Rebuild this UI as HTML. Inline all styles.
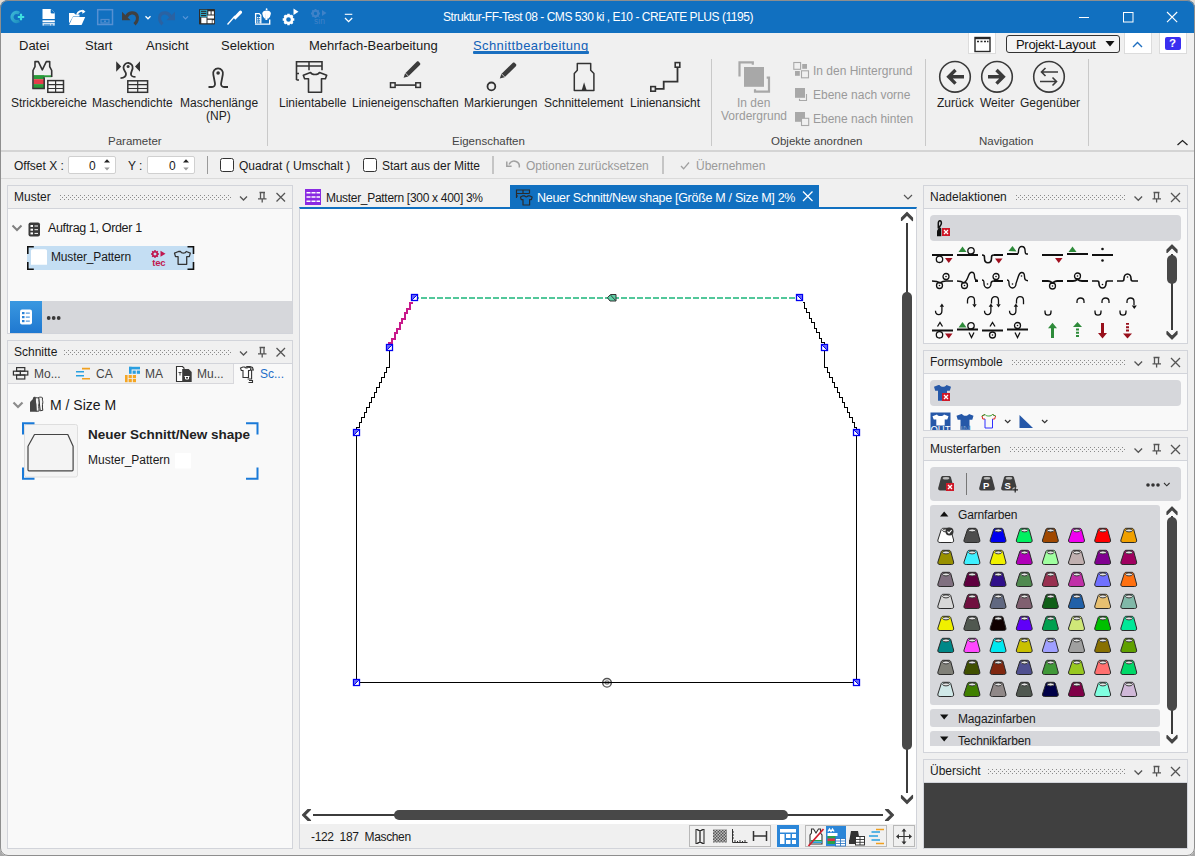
<!DOCTYPE html>
<html><head><meta charset="utf-8">
<style>
*{box-sizing:border-box;margin:0;padding:0}
html,body{width:1195px;height:856px;overflow:hidden;background:linear-gradient(#e4dcd2 0,#e4dcd2 40px,#a8a8a8 800px)}
body{font-family:"Liberation Sans",sans-serif;font-size:12px;color:#1a1a1a;position:relative}
.a{position:absolute}
.t{position:absolute;white-space:nowrap;line-height:1}
#win{position:absolute;left:0;top:0;width:1195px;height:856px;background:#f0f0f0;border-radius:8px;overflow:hidden}
#frame{position:absolute;left:0;top:0;width:1195px;height:856px;border:1px solid #8e8e8e;border-radius:8px;pointer-events:none}
#title{position:absolute;left:0;top:0;width:1195px;height:33px;background:#1170c0}
.panel{position:absolute;border:1px solid #d2d4da;background:#f9f9f9}
.ph{position:absolute;left:0;top:0;right:0;height:23px;background:#f0f0f0;border-bottom:1px solid #d2d4da}
svg{position:absolute;overflow:visible}
.rl{font-size:12px;color:#1e1e1e}
.gl{font-size:11.5px;color:#444}
.sep{position:absolute;width:1px;background:#c9c9c9}
.dis{color:#9a9a9a}
</style></head><body>
<svg width="0" height="0" style="position:absolute">
<defs>
<pattern id="dots" width="4" height="4" patternUnits="userSpaceOnUse"><rect x="0" y="0" width="1" height="1" fill="#8a8a8a"/><rect x="2" y="2" width="1" height="1" fill="#8a8a8a"/></pattern>
<pattern id="chk" width="3" height="3" patternUnits="userSpaceOnUse" x="713" y="829.5"><rect width="1.5" height="1.5" fill="#222"/><rect x="1.5" y="1.5" width="1.5" height="1.5" fill="#222"/></pattern>
</defs>
</svg>
<div id="win">
 <div id="title"></div>
 <!-- C+ -->
 <svg style="left:0;top:0" width="40" height="33">
  <defs><linearGradient id="cg" x1="0" y1="0" x2="1" y2="1"><stop offset="0" stop-color="#3bb6d6"/><stop offset="1" stop-color="#1e90c0"/></linearGradient></defs>
  <path d="M19.2 13.2 A4.6 4.6 0 1 0 19.2 20.8" fill="none" stroke="url(#cg)" stroke-width="3.2"/>
  <path d="M21 13.8v6.4M17.8 17h6.4" stroke="#3ee0e0" stroke-width="2.2"/>
 </svg>
 <!-- doc -->
 <svg style="left:0;top:0" width="60" height="33">
  <path d="M42.5 9h8.5l3.8 3.8V19H42.5z" fill="#fff"/>
  <path d="M51 9v4h3.8" fill="#1170c0"/>
  <path d="M51.2 9.3v3.7h3.5" fill="none" stroke="#1170c0" stroke-width="0.9"/>
  <rect x="42.5" y="20.3" width="12.3" height="1.8" fill="#fff"/>
  <rect x="42.5" y="22.8" width="12.3" height="1" fill="#fff"/>
  <path d="M42.5 24.8h2M45.5 24.8h1M47.5 24.8h1M49.5 24.8h2M52.5 24.8h2.3" stroke="#fff" stroke-width="1.2"/>
 </svg>
 <!-- folder -->
 <svg style="left:0;top:0" width="90" height="33">
  <path d="M69 13h5l1.5 1.5h4v2H73l-4 7z" fill="#fff"/>
  <path d="M69.2 25l3.6-8h12.4l-3.6 8z" fill="#fff"/>
  <path d="M77 14.5c1-3 4-4.5 7-3" fill="none" stroke="#fff" stroke-width="1.8"/>
  <path d="M82.5 9.5l3 2.3-3.2 2" fill="#fff"/>
 </svg>
 <!-- save (disabled) -->
 <svg style="left:0;top:0" width="120" height="33">
  <rect x="97.7" y="9.7" width="14.8" height="14.8" fill="none" stroke="#5690d2" stroke-width="1.5"/>
  <rect x="101" y="19.5" width="8" height="3.5" fill="none" stroke="#4f8ccf" stroke-width="1.2"/>
  <rect x="104" y="20.5" width="2" height="1.5" fill="#4f8ccf"/>
 </svg>
 <!-- undo -->
 <svg style="left:0;top:0" width="200" height="33">
  <path d="M122 11.8V20.3H130.5Z" fill="#404040"/>
  <path d="M126.3 17C128.5 12.3 134.5 11.3 136.8 15.3C138.3 18.3 137 22 134.5 24.3" fill="none" stroke="#404040" stroke-width="3.2"/>
  <path d="M145.5 16.3l2.5 2.5 2.5-2.5" fill="none" stroke="#fff" stroke-width="1.3"/>
  <path d="M175 11.8V20.3H166.5Z" fill="#2a62a2"/>
  <path d="M170.7 17C168.5 12.3 162.5 11.3 160.2 15.3C158.7 18.3 160 22 162.5 24.3" fill="none" stroke="#2a62a2" stroke-width="3.2"/>
  <path d="M183 16.3l2.5 2.5 2.5-2.5" fill="none" stroke="#5a96d8" stroke-width="1.2"/>
 </svg>
 <!-- dark box -->
 <svg style="left:0;top:0" width="360" height="33">
  <rect x="199" y="9" width="16" height="15.5" rx="0.8" fill="#2d2d2d"/>
  <rect x="200.6" y="10.3" width="6.2" height="6.4" fill="none" stroke="#2fb0d0" stroke-width="0.9"/>
  <path d="M200.8 12.4h5.8M200.8 14.5h5.8" stroke="#2fb0d0" stroke-width="0.9"/>
  <rect x="208.3" y="11.3" width="2.3" height="3.2" fill="#fff"/><rect x="211.6" y="11.3" width="2.3" height="3.2" fill="#fff"/>
  <rect x="207.5" y="15.5" width="6.5" height="3" fill="#fff"/>
  <rect x="201.3" y="17.6" width="5.2" height="5.6" fill="#fff"/>
  <rect x="207.5" y="19.8" width="4.3" height="3.4" fill="#fff"/><rect x="212.5" y="20.2" width="1.6" height="3" fill="#fff"/>
  <!-- pen -->
  <path d="M227.5 24.5l7.5-8.5" stroke="#fff" stroke-width="1.3"/>
  <path d="M233.3 17.6l5.8-6.4c.8-.8 2-.8 2.6 0c.6.6.6 1.6-.2 2.4l-6.2 6.2z" fill="#fff"/>
  <!-- device -->
  <path d="M255.6 23.6V13.6h3.6l1.6 1.6v8.4" fill="none" stroke="#fff" stroke-width="1.3"/>
  <path d="M255 24.1H269.7V19.5" fill="none" stroke="#fff" stroke-width="1.4"/>
  <rect x="257.1" y="17" width="1.3" height="1.3" fill="#fff"/><rect x="257.1" y="19.2" width="1.3" height="1.3" fill="#fff"/><rect x="257.1" y="21.4" width="1.3" height="1.3" fill="#fff"/>
  <path d="M259 17.6h1.6M259 19.8h1.6M259 22h1.6" stroke="#fff" stroke-width="1.1"/>
  <path d="M262.3 13.8C262.3 11.6 264.3 10.6 266.6 10.6S270.9 11.6 270.9 13.8L270 16.8L268.6 18.6H264.6L263.2 16.8Z" fill="#fff"/>
  <path d="M266.4 13.8v4.8" stroke="#1170c0" stroke-width="1.3"/>
  <path d="M265.4 14.3c0-.8.5-1.2 1-1.2s1 .4 1 1.2v5.8h-2z" fill="#fff"/>
  <circle cx="266.6" cy="9.2" r="0.9" fill="#fff"/>
  <!-- gear -->
  <g transform="translate(288.5 19.5)">
   <circle r="3.6" fill="none" stroke="#fff" stroke-width="2.6"/>
   <path d="M0-5.8v2.2M0 3.6v2.2M-5.8 0h2.2M3.6 0h2.2M-4.1-4.1l1.6 1.6M2.5 2.5l1.6 1.6M4.1-4.1l-1.6 1.6M-2.5 2.5l-1.6 1.6" stroke="#fff" stroke-width="2.4"/>
  </g>
  <path d="M293.5 8.5l5 3.2-5 3.2z" fill="#fff"/>
  <!-- gear sin disabled -->
  <g transform="translate(315.5 13.5)" opacity="1">
   <circle r="2.7" fill="none" stroke="#3f82c8" stroke-width="2"/>
   <path d="M0-4.5v1.8M0 2.7v1.8M-4.5 0h1.8M2.7 0h1.8M-3.2-3.2l1.3 1.3M1.9 1.9l1.3 1.3M3.2-3.2l-1.3 1.3M-1.9 1.9l-1.3 1.3" stroke="#3f82c8" stroke-width="1.8"/>
  </g>
  <path d="M322 10l4.5 3-4.5 3z" fill="#3f82c8"/>
  <text x="314" y="24.3" font-family="Liberation Sans" font-size="8.5" fill="#3f82c8">sin</text>
  <!-- qat dropdown -->
  <path d="M344.8 14.3h7.5" stroke="#fff" stroke-width="1.1"/>
  <path d="M345 18l3.6 3.6 3.6-3.6" fill="none" stroke="#fff" stroke-width="1.3"/>
 </svg>
 <div class="t" style="left:443px;top:11px;color:#fff;font-size:12px;letter-spacing:-0.47px">Struktur-FF-Test 08 - CMS 530 ki , E10 - CREATE PLUS (1195)</div>
 <!-- window controls -->
 <svg style="left:0;top:0" width="1195" height="33">
  <path d="M1079 17.5h10" stroke="#fff" stroke-width="1"/>
  <rect x="1123.5" y="12.5" width="9.5" height="9.5" fill="none" stroke="#fff" stroke-width="1"/>
  <path d="M1167 12l10.2 10.2M1177.2 12L1167 22.2" stroke="#fff" stroke-width="1.1"/>
 </svg>

 <!-- menu -->
 <div class="t" style="left:19px;top:39px;font-size:13px">Datei</div>
 <div class="t" style="left:85px;top:39px;font-size:13px">Start</div>
 <div class="t" style="left:146px;top:39px;font-size:13px">Ansicht</div>
 <div class="t" style="left:221px;top:39px;font-size:13px">Selektion</div>
 <div class="t" style="left:309px;top:39px;font-size:13px">Mehrfach-Bearbeitung</div>
 <div class="t" style="left:473px;top:39px;font-size:13px;color:#1160b8;letter-spacing:0.4px">Schnittbearbeitung</div>
 <div class="a" style="left:473px;top:51px;width:116px;height:3px;background:#1a6fc0;border-radius:1px"></div>
 <!-- right menu controls -->
 <div class="a" style="left:968px;top:33px;width:28px;height:21px;background:#fff;border:1px solid #dcdcdc;border-top:none"></div>
 <svg style="left:0;top:0" width="1195" height="60">
  <rect x="975" y="37.5" width="15" height="14" fill="none" stroke="#2a2a2a" stroke-width="1.4"/>
  <rect x="975" y="37" width="15" height="2.2" fill="#2a2a2a"/>
  <path d="M977 41.5h2M980.5 41.5h2M984 41.5h2M987 41.5h1.5" stroke="#2a2a2a" stroke-width="1.3"/>
 </svg>
 <div class="a" style="left:1006px;top:35px;width:114px;height:18px;background:#f4f4f4;border:1.3px solid #333;border-radius:3px"></div>
 <div class="t" style="left:1016px;top:38px;font-size:13px;color:#111;letter-spacing:-0.3px">Projekt-Layout</div>
 <svg style="left:0;top:0" width="1195" height="60"><path d="M1105.5 41h9l-4.5 5.5z" fill="#111"/></svg>
 <div class="a" style="left:1124px;top:33px;width:28px;height:21px;background:#fff;border:1px solid #dcdcdc;border-top:none"></div>
 <svg style="left:0;top:0" width="1195" height="60"><path d="M1133 47l4.5-4.5 4.5 4.5" fill="none" stroke="#1f6fc0" stroke-width="1.4"/></svg>
 <div class="a" style="left:1159px;top:33px;width:28px;height:21px;background:#fff;border:1px solid #dcdcdc;border-top:none"></div>
 <div class="a" style="left:1165px;top:37px;width:16px;height:13px;background:#3a2ff0;border-radius:2px"></div>
 <div class="t" style="left:1169px;top:38px;font-size:11.5px;color:#fff;font-weight:bold">?</div>
 <!-- RIBBON -->
 <div class="a" style="left:0;top:150px;width:1195px;height:2px;background:#d4d4d4"></div>
 <div class="sep" style="left:267px;top:59px;height:87px"></div>
 <div class="sep" style="left:711px;top:59px;height:87px"></div>
 <div class="sep" style="left:925px;top:59px;height:87px"></div>
 <div class="sep" style="left:1088px;top:59px;height:87px"></div>
 <svg style="left:0;top:0" width="1195" height="150">
  <!-- Strickbereiche -->
  <rect x="33.5" y="75.3" width="18.2" height="1.9" fill="#2a9a3a"/>
  <rect x="33.5" y="75.3" width="10.6" height="3.9" fill="#2a9a3a"/>
  <rect x="33.5" y="79.2" width="10.6" height="4.9" fill="#e63c4a"/>
  <rect x="33.5" y="84.1" width="10.6" height="4.3" fill="#2a9a3a"/>
  <path d="M33 88.6V70.5L35 66.6V61.6H38.3L42.3 69.8L46.3 61.6H49.7V66.6L51.7 70.5V77" fill="none" stroke="#333" stroke-width="1.6" stroke-linejoin="round"/>
  <path d="M32.3 88.6H44.2V77.2" fill="none" stroke="#333" stroke-width="1.5"/>
  <rect x="47.8" y="80.6" width="15.7" height="11.7" fill="#f7f7f7" stroke="#333" stroke-width="1.5"/>
  <path d="M47.8 84.6h15.7M47.8 88.5h15.7M55.6 80.6v11.7" stroke="#333" stroke-width="1.2"/>
  <!-- Maschendichte -->
  <path d="M116.2 61.3l5 5.2-5 5.2z M140 61.3l-5 5.2 5 5.2z" fill="#333"/>
  <path d="M120.5 78.2C123.5 78 126 76.5 126 74C126 71.8 123.5 70.5 123.5 67.8A4.6 4.6 0 1 1 132.6 68.5C132.2 70.5 130.8 72 131 74.5C131.2 76.2 133 76.8 135.5 76.8" fill="none" stroke="#333" stroke-width="1.8"/>
  <circle cx="128.1" cy="66.6" r="1.5" fill="#333"/>
  <rect x="127.8" y="80.8" width="19.8" height="11.5" fill="#f0f0f0" stroke="#333" stroke-width="1.5"/>
  <path d="M127.8 84.6h19.8M127.8 88.5h19.8M137.7 80.8v11.5" stroke="#333" stroke-width="1.2"/>
  <!-- Maschenlaenge -->
  <path d="M208.5 87H212C214 87 215.3 85.5 215 83.3L213.3 74.5A4.9 4.9 0 1 1 222.8 74.5L221.1 83.3C220.8 85.5 222 87 224.2 87H228" fill="none" stroke="#333" stroke-width="1.8"/>
  <circle cx="218.1" cy="73" r="1.8" fill="#333"/>
  <!-- Linientabelle -->
  <path d="M296.5 80V61.8h25.5v8.5" fill="none" stroke="#333" stroke-width="1.6"/>
  <path d="M296.5 66h25.5M309 61.8v8.5" stroke="#333" stroke-width="1.5"/>
  <path d="M296.5 73.5h2.5M296.5 80h2.5" stroke="#333" stroke-width="1.5"/>
  <path d="M310.5 72.5L303.3 75.2l1.3 3.6h3.9V92.2h13V78.8h3.9l1.3-3.6-7.2-2.7c-.7 1.3-2.3 2-4.5 2s-3.8-.7-4.5-2z" fill="#f0f0f0" stroke="#333" stroke-width="1.6" stroke-linejoin="round"/>
  <!-- Linieneigenschaften -->
  <rect x="390.5" y="82.8" width="4.6" height="4.6" fill="none" stroke="#333" stroke-width="1.5"/>
  <rect x="415.8" y="82.8" width="4.6" height="4.6" fill="none" stroke="#333" stroke-width="1.5"/>
  <path d="M395.2 85.1h20.6" stroke="#333" stroke-width="1.6"/>
  <path d="M403.6 77.8l1.4-4.4 11.7-11.6c.6-.6 1.5-.6 2.1 0l1.1 1.1c.6.6.6 1.5 0 2.1L408.2 76.6z" fill="#3c3c3c"/><path d="M405.3 73l4 4" stroke="#f0f0f0" stroke-width="0.8"/>
  <!-- Markierungen -->
  <circle cx="491.4" cy="86.4" r="3.9" fill="none" stroke="#333" stroke-width="1.8"/>
  <path d="M499.8 78.6l1.5-4.6 11.3-11.1c.6-.6 1.6-.6 2.2 0l1.1 1.1c.6.6.6 1.6 0 2.2L504.6 77.3z" fill="#3c3c3c"/>
  <path d="M501.5 73.8l4 4" stroke="#f0f0f0" stroke-width="0.8"/>
  <!-- Schnittelement -->
  <path d="M577.3 63.4h13.4v6.9l3.2 3.2v17h-19.6v-17l3-3.2z" fill="none" stroke="#333" stroke-width="1.5" stroke-linejoin="round"/>
  <path d="M581.6 90.6l2.5-8.4 2.6 8.4z" fill="#333"/>
  <!-- Linienansicht -->
  <rect x="650.8" y="86.6" width="4.6" height="4.6" fill="none" stroke="#333" stroke-width="1.6"/>
  <rect x="675.2" y="62.6" width="4.6" height="4.6" fill="none" stroke="#333" stroke-width="1.6"/>
  <path d="M655.4 88.9h8.3v-7.2h13.8V67.2" fill="none" stroke="#333" stroke-width="1.8"/>
  <!-- Vordergrund (disabled) -->
  <path d="M739.5 76.5V62.3h13.3v2.5" fill="none" stroke="#a8a8a8" stroke-width="2.2"/>
  <path d="M755 89.3v2.4h14V77.7h-2.3" fill="none" stroke="#a8a8a8" stroke-width="2.2"/>
  <rect x="744" y="67" width="20" height="19.8" fill="#a8a8a8"/>
  <!-- small disabled icons -->
  <rect x="793.8" y="62.5" width="6.8" height="6.8" fill="none" stroke="#a8a8a8" stroke-width="1.1"/>
  <rect x="802.2" y="64" width="4.8" height="4.8" fill="#a8a8a8"/>
  <rect x="795" y="71" width="4.8" height="4.8" fill="#a8a8a8"/>
  <rect x="801.5" y="70.8" width="7" height="7" fill="none" stroke="#a8a8a8" stroke-width="1.1"/>
  <rect x="795" y="88" width="10" height="9.8" fill="#a8a8a8"/>
  <path d="M806.5 94v6.5h-7v-1.8" fill="none" stroke="#a8a8a8" stroke-width="1.1"/>
  <rect x="795" y="112" width="10" height="9.8" fill="#a8a8a8"/>
  <rect x="801.5" y="118.3" width="7.2" height="7.2" fill="#f0f0f0" stroke="#a8a8a8" stroke-width="1.1"/>
  <!-- Navigation -->
  <circle cx="955" cy="76.8" r="15.3" fill="none" stroke="#3a3a3a" stroke-width="1.6"/>
  <path d="M964 76.8h-14.5M955.5 70l-6.8 6.8 6.8 6.8" fill="none" stroke="#3a3a3a" stroke-width="3.4"/>
  <circle cx="997" cy="76.8" r="15.3" fill="none" stroke="#3a3a3a" stroke-width="1.6"/>
  <path d="M988 76.8h14.5M996.5 70l6.8 6.8-6.8 6.8" fill="none" stroke="#3a3a3a" stroke-width="3.4"/>
  <circle cx="1049" cy="76.8" r="15.3" fill="none" stroke="#3a3a3a" stroke-width="1.6"/>
  <path d="M1058 72h-16M1045.5 68l-4 4 4 4" fill="none" stroke="#3a3a3a" stroke-width="1.6"/>
  <path d="M1040 81.5h16M1052.5 77.5l4 4-4 4" fill="none" stroke="#3a3a3a" stroke-width="1.6"/>
  <!-- collapse caret -->
  <path d="M1177.5 145l5-4.5 5 4.5" fill="none" stroke="#222" stroke-width="1.3"/>
 </svg>
 <div class="t rl" style="left:11px;top:97px">Strickbereiche</div>
 <div class="t rl" style="left:92px;top:97px">Maschendichte</div>
 <div class="t rl" style="left:180px;top:97px">Maschenlänge</div>
 <div class="t rl" style="left:206px;top:110px">(NP)</div>
 <div class="t gl" style="left:108px;top:136px">Parameter</div>
 <div class="t rl" style="left:279px;top:97px">Linientabelle</div>
 <div class="t rl" style="left:352px;top:97px">Linieneigenschaften</div>
 <div class="t rl" style="left:464px;top:97px">Markierungen</div>
 <div class="t rl" style="left:544px;top:97px">Schnittelement</div>
 <div class="t rl" style="left:630px;top:97px">Linienansicht</div>
 <div class="t gl" style="left:452px;top:136px">Eigenschaften</div>
 <div class="t rl dis" style="left:737px;top:97px">In den</div>
 <div class="t rl dis" style="left:721px;top:110px">Vordergrund</div>
 <div class="t rl dis" style="left:813px;top:65px">In den Hintergrund</div>
 <div class="t rl dis" style="left:813px;top:89px">Ebene nach vorne</div>
 <div class="t rl dis" style="left:813px;top:113px">Ebene nach hinten</div>
 <div class="t gl" style="left:771px;top:136px">Objekte anordnen</div>
 <div class="t rl" style="left:937px;top:97px">Zurück</div>
 <div class="t rl" style="left:980px;top:97px">Weiter</div>
 <div class="t rl" style="left:1020px;top:97px">Gegenüber</div>
 <div class="t gl" style="left:979px;top:136px">Navigation</div>
 <!-- OPTIONS BAR -->
 <div class="a" style="left:0;top:178px;width:1195px;height:1px;background:#dadada"></div>
 <div class="t" style="left:14px;top:160px;font-size:12px">Offset X :</div>
 <div class="a" style="left:68px;top:156px;width:48px;height:18px;background:#fff;border:1px solid #d0d0d0;border-radius:2px"></div>
 <div class="t" style="left:89px;top:160px;font-size:12px">0</div>
 <div class="t" style="left:128px;top:160px;font-size:12px">Y :</div>
 <div class="a" style="left:147px;top:156px;width:48px;height:18px;background:#fff;border:1px solid #d0d0d0;border-radius:2px"></div>
 <div class="t" style="left:169px;top:160px;font-size:12px">0</div>
 <svg style="left:0;top:0" width="800" height="180">
  <path d="M104 162.5l3-3.3 3 3.3z" fill="#222"/><path d="M104.3 167.5h5.4l-2.7 3z" fill="#9a9a9a"/>
  <path d="M183 162.5l3-3.3 3 3.3z" fill="#222"/><path d="M183.3 167.5h5.4l-2.7 3z" fill="#9a9a9a"/>
  <path d="M207.5 156v18M493 156v18M663 156v18" stroke="#9a9a9a" stroke-width="1"/>
  <rect x="220.5" y="158.5" width="13" height="13" rx="2" fill="#fff" stroke="#333" stroke-width="1"/>
  <rect x="363.5" y="158.5" width="13" height="13" rx="2" fill="#fff" stroke="#333" stroke-width="1"/>
  <path d="M509 164.5c1.5-3 4.5-4 7-3s3.7 3.5 3.3 6" fill="none" stroke="#a0a0a0" stroke-width="1.5"/>
  <path d="M506.8 161.5v4.8h4.8" fill="none" stroke="#a0a0a0" stroke-width="1.5"/>
  <path d="M681 166l2.6 2.8 5.4-6.3" fill="none" stroke="#a0a0a0" stroke-width="1.3"/>
 </svg>
 <div class="t" style="left:239px;top:160px;font-size:12px">Quadrat ( Umschalt )</div>
 <div class="t" style="left:382px;top:160px;font-size:12px">Start aus der Mitte</div>
 <div class="t dis" style="left:526px;top:160px;font-size:12px">Optionen zurücksetzen</div>
 <div class="t dis" style="left:696px;top:160px;font-size:12px">Übernehmen</div>
 <!-- LEFT: Muster -->
 <div class="panel" style="left:7px;top:185px;width:286px;height:149px">
  <div class="ph"></div>
 </div>
 <div class="t" style="left:14px;top:191px;font-size:12px">Muster</div>
 <svg style="left:60px;top:195px" width="172" height="5"><rect width="172" height="5" fill="url(#dots)"/></svg>
 <svg style="left:0;top:0" width="300" height="850">
  <path d="M240 196.5l3.5 3.5 3.5-3.5" fill="none" stroke="#555" stroke-width="1.3"/>
  <path d="M259.5 192.5h5.5M260.5 192.5v6.5M264 192.5v6.5M258 198.8h8.5M262.2 199v3.5" fill="none" stroke="#555" stroke-width="1.3"/>
  <path d="M276.5 193l8.5 8.5M285 193l-8.5 8.5" stroke="#555" stroke-width="1.3"/>
  <!-- tree -->
  <path d="M12.5 225.5l4.5 4.5 4.5-4.5" fill="none" stroke="#808080" stroke-width="2"/>
  <rect x="28.5" y="222.5" width="11.5" height="14" rx="2" fill="#3a3a3a"/>
  <rect x="30.5" y="225" width="2.5" height="2" fill="#fff"/><rect x="30.5" y="228.7" width="2.5" height="2" fill="#fff"/><rect x="30.5" y="232.4" width="2.5" height="2" fill="#fff"/>
  <path d="M34.5 226h3.5M34.5 229.7h3.5M34.5 233.4h3.5" stroke="#fff" stroke-width="1"/>
  <!-- selection -->
  <rect x="27" y="246" width="167" height="24" fill="#c4def3"/>
  <path d="M27.8 254v-7.2h6M187.5 246.8h6v7.2M27.8 262v7.2h6M187.5 269.2h6v-7.2" fill="none" stroke="#111" stroke-width="1.6"/>
  <path d="M31 264.8V251c0-1 .8-1.8 1.8-1.8h12.4c1 0 1.8.8 1.8 1.8v13.8z" fill="#fff"/>
  <!-- tec icon -->
  <g fill="#c0174f">
   <circle cx="155" cy="254" r="2.3" fill="none" stroke="#c0174f" stroke-width="1.6"/>
   <path d="M155 250v1.5M155 256.5v1.5M151 254h1.5M157.5 254h1.5M152.2 251.2l1 1M156.8 255.8l1 1M157.8 251.2l-1 1M153.2 255.8l-1 1" stroke="#c0174f" stroke-width="1.4"/>
   <path d="M160.5 250.8l5 3-5 3z"/>
  </g>
  <text x="152.3" y="265.5" font-family="Liberation Sans" font-weight="bold" font-size="9.5" fill="#c0174f" letter-spacing="-0.3">tec</text>
  <!-- shirt -->
  <path d="M178.5 251.5l-4 1.6 1 3.6h2.6v7.6h8.6v-7.6h2.6l1-3.6-4-1.6c-.5 1.1-1.5 1.6-2.9 1.6s-2.4-.5-2.9-1.6z" fill="none" stroke="#333" stroke-width="1.3" stroke-linejoin="round"/>
 </svg>
 <div class="t" style="left:48px;top:222px;font-size:12.5px;letter-spacing:-0.35px">Auftrag 1, Order 1</div>
 <div class="t" style="left:51px;top:251px;font-size:12px;letter-spacing:-0.15px">Muster_Pattern</div>
 <!-- bottom toolbar -->
 <div class="a" style="left:10px;top:301px;width:282px;height:32px;background:#d6d7db"></div>
 <div class="a" style="left:10px;top:301px;width:32px;height:32px;background:linear-gradient(#3a98e0,#1f78d0)"></div>
 <svg style="left:0;top:0" width="300" height="850">
  <rect x="20" y="309.5" width="12" height="15" rx="2" fill="#fff"/>
  <rect x="22" y="312" width="2.5" height="2.2" fill="#2a82d6"/><rect x="22" y="316" width="2.5" height="2.2" fill="#2a82d6"/><rect x="22" y="320" width="2.5" height="2.2" fill="#2a82d6"/>
  <path d="M25.8 313.1h4M25.8 317.1h4M25.8 321.1h4" stroke="#2a82d6" stroke-width="1"/>
  <circle cx="48.7" cy="318" r="1.9" fill="#3a3a3a"/><circle cx="53.7" cy="318" r="1.9" fill="#3a3a3a"/><circle cx="58.7" cy="318" r="1.9" fill="#3a3a3a"/>
 </svg>

 <!-- LEFT: Schnitte -->
 <div class="panel" style="left:7px;top:340px;width:286px;height:509px">
  <div class="ph"></div>
  <div class="a" style="left:0;top:23px;right:0;height:20px;background:#f0f0f0;border-bottom:1px solid #d8d8dc"></div>
  <div class="a" style="left:225px;top:23px;width:59px;height:20px;background:#f9f9f9;border-left:1px solid #d8d8dc"></div>
 </div>
 <div class="t" style="left:14px;top:346px;font-size:12px">Schnitte</div>
 <svg style="left:64px;top:350px" width="168" height="5"><rect width="168" height="5" fill="url(#dots)"/></svg>
 <svg style="left:0;top:0" width="300" height="850">
  <path d="M240 351.5l3.5 3.5 3.5-3.5" fill="none" stroke="#555" stroke-width="1.3"/>
  <path d="M259.5 347.5h5.5M260.5 347.5v6.5M264 347.5v6.5M258 353.8h8.5M262.2 354v3.5" fill="none" stroke="#555" stroke-width="1.3"/>
  <path d="M276.5 348l8.5 8.5M285 348l-8.5 8.5" stroke="#555" stroke-width="1.3"/>
  <!-- tab icons -->
  <g fill="none" stroke="#333" stroke-width="1.2">
   <rect x="16.6" y="367.6" width="8.2" height="3.6"/><rect x="13.4" y="371.2" width="7" height="3.8"/><rect x="20.4" y="371.2" width="7.4" height="3.8"/><rect x="16.6" y="375" width="8.2" height="4"/>
  </g>
  <path d="M76 371.8h8M76 375.8h8" stroke="#28a0e0" stroke-width="1.6"/>
  <path d="M82 368.6h8M82 378.8h8" stroke="#f0a020" stroke-width="1.6"/>
  <g fill="#2a9ee0">
   <rect x="129" y="366.8" width="2.6" height="7"/><rect x="129" y="366.8" width="11" height="2.6"/>
   <rect x="132.6" y="370.6" width="3.2" height="3.2"/><rect x="136.8" y="370.6" width="3.2" height="3.2"/>
  </g>
  <g fill="#f5a623">
   <rect x="125" y="375" width="2.6" height="7.2"/>
   <rect x="128.6" y="375" width="3.2" height="3.2"/><rect x="132.8" y="375" width="3.2" height="3.2"/>
   <rect x="128.6" y="379" width="3.2" height="3.2"/><rect x="132.8" y="379" width="3.2" height="3.2"/>
  </g>
  <path d="M176.5 366.5h6l1.5 1.5v13.5h-7.5z" fill="#fff" stroke="#333" stroke-width="1.1"/>
  <path d="M178.5 372.5h3M180 372.5v3" stroke="#333" stroke-width="0.9"/>
  <path d="M182.2 369h6.5l3 3v10h-9.5z" fill="#3a3a3a"/>
  <path d="M184.5 376.5h5M185.5 376.5v2.5h3v-2.5" fill="none" stroke="#fff" stroke-width="1"/>
  <path d="M243 367l-2.5 1 .8 2.5h1.7v7h5.5v-7h1.7l.8-2.5-2.5-1c-.3.6-1 1-2 1s-1.7-.4-2-1z" fill="#fff" stroke="#333" stroke-width="1.1"/>
  <path d="M245.5 367.5l1.5-1h3l2.5 1 .8 2.5h-1.7v9h-4" fill="none" stroke="#333" stroke-width="1.1"/>
  <path d="M249 380.5h3.5v2h-4" fill="none" stroke="#333" stroke-width="1.1"/>
  <!-- tree -->
  <path d="M13.5 402.5l4.5 4.5 4.5-4.5" fill="none" stroke="#8c8c8c" stroke-width="2.2"/>
  <path d="M38.5 397.5c1.5-.5 3-.5 4 .3-.5 2 .5 3 .3 5-.5 2-.5 4 0 7.5l-2.5.5z" fill="#f4f4f4" stroke="#333" stroke-width="1"/>
  <path d="M35 398c1.5-.5 3-.3 4 .5-.5 2 .3 3 0 5-.5 2-.3 4 .2 7.5l-3 .3z" fill="#f4f4f4" stroke="#333" stroke-width="1"/>
  <path d="M30 411.7v-8.5c0-1.2.6-2 1.5-2.7l1.2-1.3.5-1.8c.4-.6 1.5-.8 2.4-.3v2c0 1.5.3 3 .8 4.8v7.8z" fill="#454545"/>
  <!-- card -->
  <rect x="24.5" y="424.5" width="53" height="52.5" rx="2" fill="#f4f4f4" stroke="#dedede" stroke-width="1"/>
  <path d="M34.5 434.5h33.3l5.3 11.8v23.5c0 .6-.4 1-1 1H29c-.6 0-1-.4-1-1V446.3z" fill="#f4f4f4" stroke="#444" stroke-width="1.2" stroke-linejoin="round"/>
  <path d="M23 434.5v-11.3h11.5M246 423.2h11.5v11.3M23 467.5v11.3h11.5M246 478.8h11.5v-11.3" fill="none" stroke="#1a7ad8" stroke-width="2"/>
  <rect x="175" y="453" width="16" height="15.5" rx="1" fill="#fff"/>
 </svg>
 <div class="t" style="left:34px;top:368px;font-size:12px;color:#444">Mo...</div>
 <div class="t" style="left:96px;top:368px;font-size:12px;color:#444">CA</div>
 <div class="t" style="left:145px;top:368px;font-size:12px;color:#444">MA</div>
 <div class="t" style="left:197px;top:368px;font-size:12px;color:#444">Mu...</div>
 <div class="t" style="left:260px;top:368px;font-size:12px;color:#1f6fc8">Sc...</div>
 <div class="t" style="left:50px;top:398px;font-size:14px">M / Size M</div>
 <div class="t" style="left:88px;top:428px;font-size:13.5px;font-weight:bold;letter-spacing:0px;color:#222">Neuer Schnitt/New shape</div>
 <div class="t" style="left:88px;top:454px;font-size:12px">Muster_Pattern</div>
 <!-- DOC AREA -->
 <div class="a" style="left:510px;top:185px;width:309px;height:23px;background:#1170c0"></div>
 <div class="a" style="left:299px;top:207px;width:618px;height:642px;background:#fff;border:1px solid #d2d4da;border-top:2px solid #1170c0"></div>
 <div class="a" style="left:300px;top:824px;width:616px;height:24px;background:#f0f0f0"></div>
 <svg style="left:0;top:0" width="1195" height="856">
  <!-- purple tab icon -->
  <rect x="305" y="189" width="16" height="16" fill="#8a2be2"/>
  <path d="M306.5 192.7h4M311.5 192.7h4M316.5 192.7h3.5M306.5 197h4M311.5 197h4M316.5 197h3.5M306.5 201.3h4M311.5 201.3h4M316.5 201.3h3.5" stroke="#fff" stroke-width="1.6"/>
  <!-- active tab icon -->
  <g fill="none" stroke="#2b2b2b" stroke-width="1.2">
   <path d="M516.5 198v-8h13v3.5M516.5 193.5h13M523 190v3.5M516.5 196h1.5"/>
   <path d="M520.5 197l2.5-1.2h1.6c.3.7 1 1 1.7 1s1.4-.3 1.7-1h1.6l2.5 1.2-.7 2.6h-1.8v5.4h-6.6v-5.4h-1.8z" stroke-linejoin="round"/>
  </g>
  <path d="M803 191.5l9.5 9.5M812.5 191.5L803 201" stroke="#fff" stroke-width="1.3"/>
  <path d="M904 195l4 4 4-4" fill="none" stroke="#555" stroke-width="1.2"/>
  <!-- v scrollbar -->
  <path d="M901.5 220.5l5.5-5.5 5.5 5.5v-2.5l-5.5-5.5-5.5 5.5z" fill="#444" stroke="#444" stroke-width="1.2" stroke-linejoin="round"/>
  <rect x="906" y="223" width="2" height="570" fill="#3c3c3c"/>
  <rect x="902" y="292" width="10" height="458" rx="5" fill="#484848"/>
  <path d="M901.5 795.5l5.5 5.5 5.5-5.5v2.5l-5.5 5.5-5.5-5.5z" fill="#444" stroke="#444" stroke-width="1.2" stroke-linejoin="round"/>
  <!-- h scrollbar -->
  <path d="M310.5 809.5l-5.5 5.5 5.5 5.5h-2.5l-5.5-5.5 5.5-5.5z" fill="#444" stroke="#444" stroke-width="1.2" stroke-linejoin="round"/>
  <rect x="313" y="814" width="570" height="2" fill="#3c3c3c"/>
  <rect x="394" y="810" width="394" height="10" rx="5" fill="#484848"/>
  <path d="M885.5 809.5l5.5 5.5-5.5 5.5h2.5l5.5-5.5-5.5-5.5z" fill="#444" stroke="#444" stroke-width="1.2" stroke-linejoin="round"/>
  <!-- status buttons -->
  <rect x="689.5" y="825.5" width="81" height="21" fill="none" stroke="#b8b8b8" stroke-width="1"/>
  <rect x="777" y="825" width="22" height="22" fill="#2b86d8"/>
  <rect x="805.5" y="825.5" width="81" height="21" fill="none" stroke="#b8b8b8" stroke-width="1"/>
  <rect x="826" y="826" width="20" height="20" fill="#2b86d8"/>
  <rect x="893.5" y="825.5" width="21" height="21" fill="none" stroke="#b8b8b8" stroke-width="1"/>
  <!-- icon1 -->
  <path d="M696 829.5h2v1h4v-1h2v14h-2v-1h-4v1h-2z" fill="none" stroke="#333" stroke-width="1.1"/>
  <path d="M700 830v12" stroke="#333" stroke-width="1.4"/>
  <!-- checker -->
  <g fill="#333">
  </g>
  <rect x="713" y="829.5" width="14" height="13" fill="url(#chk)"/>
  <!-- ruler -->
  <path d="M732.5 829v13.5h15M735 840v2.5M737.5 841v1.5M740 840v2.5M742.5 841v1.5M745 840v2.5M732.5 832h1.5M732.5 835h1.5M732.5 838h1.5" fill="none" stroke="#333" stroke-width="1"/>
  <!-- H measure -->
  <path d="M753.5 831v10M766.5 831v10M753.5 836h13" stroke="#333" stroke-width="1.5"/>
  <!-- blue table icon -->
  <path d="M780 829h16v3.5H780zM780 834h4.5v10H780zM786 834h4.5v4H786zM792 834h4v4h-4zM786 840h4.5v4H786zM792 840h4v4h-4z" fill="#fff"/>
  <!-- vest slash -->
  <path d="M810 844v-9l1.5-2v-4h2l2.5 4 2.5-4h2v4l1.5 2v9z" fill="#fff" stroke="#333" stroke-width="1.1"/>
  <rect x="810.5" y="840" width="11.5" height="1.5" fill="#2aa048"/><rect x="810.5" y="841.5" width="11.5" height="1.5" fill="#28a0e0"/>
  <path d="M808.5 846l15-17" stroke="#d02030" stroke-width="1.8"/>
  <!-- active vest+table -->
  <path d="M828 831.5l1.5-2.5 1.5 2.5 1.5-2.5 1.5 2.5" fill="none" stroke="#fff" stroke-width="1.4"/>
  <rect x="827.5" y="833" width="10" height="3" fill="#fff"/>
  <rect x="827.5" y="836" width="8" height="2.5" fill="#2aa048"/><rect x="827.5" y="838.5" width="8" height="2.5" fill="#e03040"/><rect x="827.5" y="841" width="8" height="3" fill="#2aa048"/>
  <rect x="835.5" y="838.5" width="10" height="7.5" fill="#fff" stroke="#1f6fc0" stroke-width="0.8"/>
  <path d="M835.5 841h10M835.5 843.5h10M840.5 838.5v7.5" stroke="#1f6fc0" stroke-width="0.8"/>
  <!-- spool table -->
  <path d="M849 842l2-11h7l1.5 8" fill="#333"/>
  <rect x="849" y="840" width="7" height="4" fill="#333"/>
  <rect x="855.5" y="836.5" width="9" height="8.5" fill="#fff" stroke="#333" stroke-width="1"/>
  <path d="M855.5 839.5h9M855.5 842.3h9M860 836.5v8.5" stroke="#333" stroke-width="0.9"/>
  <!-- CA lines -->
  <path d="M869 836h9M871.5 832h8.5M871.5 840h8.5" stroke="#28a0e0" stroke-width="1.6"/>
  <path d="M876 829.5h8M876 843.5h8" stroke="#f0a020" stroke-width="1.6"/>
  <!-- move -->
  <path d="M904 829.5v14M897 836.5h14" stroke="#333" stroke-width="1.2"/>
  <path d="M904 828.5l-2.5 3h5zM904 844.5l-2.5-3h5zM896 836.5l3-2.5v5zM912 836.5l-3-2.5v5z" fill="#333"/>
 </svg>
 <div class="t" style="left:326px;top:192px;font-size:12px;color:#1a1a1a;letter-spacing:-0.3px">Muster_Pattern [300 x 400] 3%</div>
 <div class="t" style="left:537px;top:192px;font-size:12.5px;color:#fff;letter-spacing:-0.3px">Neuer Schnitt/New shape [Größe M / Size M] 2%</div>
 <div class="t" style="left:311px;top:831px;font-size:12px;letter-spacing:-0.35px">-122&nbsp; 187&nbsp; Maschen</div>
<svg style="left:0;top:0" width="1195" height="856" shape-rendering="crispEdges">
<path d="M356.5 436V682.5H856.5V436" fill="none" stroke="#000" stroke-width="1.1"/>
<path d="M389.5 351V367.5H386.5V372.5H384.5V377.5H381.5V382.5H379.5V387.5H376.5V392.5H374.5V397.5H371.5V402.5H369.5V407.5H366.5V412.5H364.5V417.5H361.5V422.5H359.5V427.5H356.5V430" fill="none" stroke="#000" stroke-width="1.1"/>
<path d="M824.5 351V367.5H827.5V372.5H829.5V377.5H832.5V382.5H834.5V387.5H837.5V392.5H839.5V397.5H842.5V402.5H844.5V407.5H847.5V412.5H849.5V417.5H852.5V422.5H854.5V427.5H856.5V430" fill="none" stroke="#000" stroke-width="1.1"/>
<path d="M802.5 302.5H804.5V308.5H806.5V312.5H809.5V318.5H811.5V322.5H814.5V328.5H816.5V332.5H819.5V338.5H821.5V342.5H824.5V345" fill="none" stroke="#000" stroke-width="1.1"/>
<path d="M413 302.5H409.5V308.5H407V312.5H404.5V318.5H402V322.5H399.5V328.5H397V332.5H394.5V338.5H392V342.5H389V344" fill="none" stroke="#c8188a" stroke-width="2"/>
</svg>
<svg style="left:0;top:0" width="1195" height="856">
<path d="M418 298H796" stroke="#52c79a" stroke-width="2" stroke-dasharray="6 2" stroke-dashoffset="5"/>
<rect x="411.5" y="294.5" width="6" height="6" fill="#fff" stroke="#0000f0" stroke-width="1.3"/><path d="M412 295h5l-5 5z" fill="#6464f8"/><path d="M412.2 299.8L416.8 295.2" stroke="#0000f0" stroke-width="1"/>
<rect x="386.5" y="344.5" width="6" height="6" fill="#fff" stroke="#0000f0" stroke-width="1.3"/><path d="M387 345h5l-5 5z" fill="#6464f8"/><path d="M387.2 349.8L391.8 345.2" stroke="#0000f0" stroke-width="1"/>
<rect x="353.5" y="429.5" width="6" height="6" fill="#fff" stroke="#0000f0" stroke-width="1.3"/><path d="M354 430h5l-5 5z" fill="#6464f8"/><path d="M354.2 434.8L358.8 430.2" stroke="#0000f0" stroke-width="1"/>
<rect x="353.5" y="679.5" width="6" height="6" fill="#fff" stroke="#0000f0" stroke-width="1.3"/><path d="M354 680h5l-5 5z" fill="#6464f8"/><path d="M354.2 684.8L358.8 680.2" stroke="#0000f0" stroke-width="1"/>
<rect x="796.5" y="294.5" width="6" height="6" fill="#fff" stroke="#0000f0" stroke-width="1.3"/><path d="M797 295h5v5z" fill="#6464f8"/><path d="M797.2 295.2L801.8 299.8" stroke="#0000f0" stroke-width="1"/>
<rect x="821.5" y="344.5" width="6" height="6" fill="#fff" stroke="#0000f0" stroke-width="1.3"/><path d="M822 345h5v5z" fill="#6464f8"/><path d="M822.2 345.2L826.8 349.8" stroke="#0000f0" stroke-width="1"/>
<rect x="853.5" y="429.5" width="6" height="6" fill="#fff" stroke="#0000f0" stroke-width="1.3"/><path d="M854 430h5v5z" fill="#6464f8"/><path d="M854.2 430.2L858.8 434.8" stroke="#0000f0" stroke-width="1"/>
<rect x="853.5" y="679.5" width="6" height="6" fill="#fff" stroke="#0000f0" stroke-width="1.3"/><path d="M854 680h5v5z" fill="#6464f8"/><path d="M854.2 680.2L858.8 684.8" stroke="#0000f0" stroke-width="1"/>
<path d="M610.5 294.5h5.5v6.5h-6l-2.6-3.3z" fill="#5ccfa5" stroke="#333" stroke-width="1"/><path d="M610.5 295l5 5.5" stroke="#333" stroke-width="0.9"/>
<circle cx="607" cy="682.8" r="4.3" fill="#fff" stroke="#555" stroke-width="1.4"/><rect x="605" y="681" width="4" height="3" rx="1" fill="none" stroke="#555" stroke-width="1"/><path d="M602 682.5h10" stroke="#000" stroke-width="1.2"/>
</svg><div class="panel" style="left:923px;top:185px;width:265px;height:159px"><div class="ph"></div></div>
<div class="t" style="left:930px;top:191px;font-size:12px">Nadelaktionen</div>
<svg style="left:1016px;top:195px" width="110" height="5"><rect width="110" height="5" fill="url(#dots)"/></svg>
<svg style="left:0;top:0" width="1195" height="856"><path d="M1134.5 196.5l3.8 3.8 3.8-3.8" fill="none" stroke="#555" stroke-width="1.3"/><path d="M1153.5 192.5h6M1154.5 192.5v6.5M1158.5 192.5v6.5M1152.5 198.8h8.5M1156.6 199v3.5" fill="none" stroke="#555" stroke-width="1.3"/><path d="M1171 193l9 9M1180 193l-9 9" stroke="#555" stroke-width="1.3"/></svg>
<div class="panel" style="left:923px;top:350px;width:265px;height:81px"><div class="ph"></div></div>
<div class="t" style="left:930px;top:356px;font-size:12px">Formsymbole</div>
<svg style="left:1012px;top:360px" width="114" height="5"><rect width="114" height="5" fill="url(#dots)"/></svg>
<svg style="left:0;top:0" width="1195" height="856"><path d="M1134.5 361.5l3.8 3.8 3.8-3.8" fill="none" stroke="#555" stroke-width="1.3"/><path d="M1153.5 357.5h6M1154.5 357.5v6.5M1158.5 357.5v6.5M1152.5 363.8h8.5M1156.6 364v3.5" fill="none" stroke="#555" stroke-width="1.3"/><path d="M1171 358l9 9M1180 358l-9 9" stroke="#555" stroke-width="1.3"/></svg>
<div class="panel" style="left:923px;top:437px;width:265px;height:316px"><div class="ph"></div></div>
<div class="t" style="left:930px;top:443px;font-size:12px">Musterfarben</div>
<svg style="left:1010px;top:447px" width="116" height="5"><rect width="116" height="5" fill="url(#dots)"/></svg>
<svg style="left:0;top:0" width="1195" height="856"><path d="M1134.5 448.5l3.8 3.8 3.8-3.8" fill="none" stroke="#555" stroke-width="1.3"/><path d="M1153.5 444.5h6M1154.5 444.5v6.5M1158.5 444.5v6.5M1152.5 450.8h8.5M1156.6 451v3.5" fill="none" stroke="#555" stroke-width="1.3"/><path d="M1171 445l9 9M1180 445l-9 9" stroke="#555" stroke-width="1.3"/></svg>
<div class="panel" style="left:923px;top:759px;width:265px;height:90px"><div class="ph"></div></div>
<div class="t" style="left:930px;top:765px;font-size:12px">Übersicht</div>
<svg style="left:988px;top:769px" width="138" height="5"><rect width="138" height="5" fill="url(#dots)"/></svg>
<svg style="left:0;top:0" width="1195" height="856"><path d="M1134.5 770.5l3.8 3.8 3.8-3.8" fill="none" stroke="#555" stroke-width="1.3"/><path d="M1153.5 766.5h6M1154.5 766.5v6.5M1158.5 766.5v6.5M1152.5 772.8h8.5M1156.6 773v3.5" fill="none" stroke="#555" stroke-width="1.3"/><path d="M1171 767l9 9M1180 767l-9 9" stroke="#555" stroke-width="1.3"/></svg>
<div class="a" style="left:924px;top:783px;width:263px;height:65px;background:#404040"></div>
<div class="a" style="left:930px;top:215px;width:251px;height:26px;background:#d6d7db;border-radius:4px"></div>
<div class="a" style="left:930px;top:380px;width:251px;height:26px;background:#d6d7db;border-radius:4px"></div>
<div class="a" style="left:930px;top:467px;width:251px;height:34px;background:#d6d7db;border-radius:4px"></div>
<div class="a" style="left:930px;top:505px;width:230px;height:200px;background:#d6d7db;border-radius:3px"></div>
<div class="a" style="left:930px;top:709px;width:230px;height:18px;background:#d6d7db;border-radius:3px"></div>
<div class="a" style="left:930px;top:731px;width:230px;height:15px;background:#d6d7db;border-radius:3px 3px 0 0"></div>
<div class="t" style="left:958px;top:509px;font-size:12px;letter-spacing:-0.15px">Garnfarben</div>
<div class="t" style="left:958px;top:713px;font-size:12px;letter-spacing:-0.15px">Magazinfarben</div>
<div class="t" style="left:958px;top:735px;font-size:12px;letter-spacing:-0.15px">Technikfarben</div>
<svg style="left:0;top:0" width="1195" height="856">
<path d="M938.3 228.5V223.5c0-1.8.8-2.8 1.6-2.8s1.5 1 1.5 2.6c0 2.2-2.6 3.2-2.6 5.5" fill="none" stroke="#111" stroke-width="1.5"/><path d="M937 236.2v-4.5c0-1.8 1.2-3.2 2.5-3.8.8-.4 1.8-.3 1.8.8v7.5z" fill="#111"/>
<rect x="942" y="228" width="8" height="8" fill="#d01828"/><path d="M944 230l4 4M948 230l-4 4" stroke="#fff" stroke-width="1.3"/>
<path d="M938.5 385l-4.5 1.8 1.2 4h2.8v10h9v-10h2.8l1.2-4-4.5-1.8c-.6 1.2-1.9 1.8-3.5 1.8s-2.9-.6-3.5-1.8z" fill="#2658a8"/>
<rect x="942" y="393" width="8" height="8" fill="#d01828"/><path d="M944 395l4 4M948 395l-4 4" stroke="#fff" stroke-width="1.3"/>
<defs><clipPath id="fsclip"><rect x="924" y="408" width="263" height="22"/></clipPath></defs><g clip-path="url(#fsclip)">
<rect x="930.5" y="412.5" width="20" height="18" fill="#2658a8"/>
<path d="M937 414.5l-4.5 1.8 1.2 3.2h2.6v6h8.4v-6h2.6l1.2-3.2-4.5-1.8c-.6 1-1.8 1.5-3.5 1.5s-2.9-.5-3.5-1.5z" fill="#fff"/>
<text x="930.5" y="433.5" font-family="Liberation Sans" font-size="10.5" fill="#fff" textLength="20" lengthAdjust="spacingAndGlyphs">OUT</text>
<path d="M961.5 414l-5 1.8 1.2 4h2.8v10h9v-10h2.8l1.2-4-4.5-1.8c-.6 1.2-1.9 1.8-3.5 1.8s-2.9-.6-3.5-1.8z" fill="#2658a8"/>
<text x="960" y="433.5" font-family="Liberation Sans" font-size="10.5" fill="#fff" stroke="#2658a8" stroke-width="0.6">IN</text>
<path d="M985 414.5l-3 1.5 .8 3h2.2" fill="none" stroke="#e02020" stroke-width="1"/><path d="M992.5 414.5l3 1.5-.8 3h-2.2" fill="none" stroke="#e02020" stroke-width="1"/>
<path d="M981.8 416l3.2-1.5c.6 1 2 1.5 3.7 1.5s3.1-.5 3.7-1.5l3.2 1.5" fill="none" stroke="#30a030" stroke-width="1"/>
<path d="M985 419v9h7.5v-9" fill="none" stroke="#3030ff" stroke-width="1"/>
</g>
<path d="M1005 420l2.7 2.7 2.7-2.7" fill="none" stroke="#333" stroke-width="1.2"/><path d="M1042 420l2.7 2.7 2.7-2.7" fill="none" stroke="#333" stroke-width="1.2"/>
<path d="M1019.5 415v13h13.5z" fill="#2658a8"/>
<path d="M941 477.5c.3-1 1-1.5 2-1.5h6c1 0 1.7.5 2 1.5l2.8 10.5c.3 1.6-.5 2.5-2 2.5H940.2c-1.5 0-2.3-.9-2-2.5z" fill="#3e3e3e"/><ellipse cx="946" cy="478.3" rx="3.3" ry="1.3" fill="#bbb"/>
<rect x="946" y="483" width="8" height="8" fill="#d01828"/><path d="M948 485l4 4M952 485l-4 4" stroke="#fff" stroke-width="1.3"/>
<path d="M966.5 473v22" stroke="#777" stroke-width="1"/>
<path d="M982 477.5c.3-1 1-1.5 2-1.5h6c1 0 1.7.5 2 1.5l2.8 10.5c.3 1.6-.5 2.5-2 2.5H981.2c-1.5 0-2.3-.9-2-2.5z" fill="#3e3e3e"/><ellipse cx="987" cy="478.3" rx="3.3" ry="1.3" fill="#bbb"/>
<text x="983" y="489" font-family="Liberation Sans" font-weight="bold" font-size="9.5" fill="#fff">P</text>
<path d="M1004 477.5c.3-1 1-1.5 2-1.5h6c1 0 1.7.5 2 1.5l2.8 10.5c.3 1.6-.5 2.5-2 2.5H1003.2c-1.5 0-2.3-.9-2-2.5z" fill="#3e3e3e"/><ellipse cx="1009" cy="478.3" rx="3.3" ry="1.3" fill="#bbb"/>
<text x="1004.5" y="489" font-family="Liberation Sans" font-weight="bold" font-size="9.5" fill="#fff">S</text>
<path d="M1012.5 489.8h5.5M1015.2 487v5.6" stroke="#d6d7db" stroke-width="3"/><path d="M1012.5 489.8h5.5M1015.2 487v5.6" stroke="#222" stroke-width="1.2"/>
<circle cx="1148" cy="485" r="1.8" fill="#333"/><circle cx="1153" cy="485" r="1.8" fill="#333"/><circle cx="1158" cy="485" r="1.8" fill="#333"/>
<path d="M1164 483l2.8 2.8 2.8-2.8" fill="none" stroke="#333" stroke-width="1.1"/>
<path d="M940 516.5l4.2-5 4.2 5z" fill="#111"/>
<path d="M940 714.5h8.4l-4.2 5z" fill="#111"/>
<path d="M940 736.5h8.4l-4.2 5z" fill="#111"/>
<path d="M941.2 529.8c.3-1 1-1.5 2-1.5h5.6c1 0 1.7.5 2 1.5l2.8 10.2c.4 1.8-.6 2.5-2.2 2.5H940.1c-1.6 0-2.6-.7-2.2-2.5z" fill="#ffffff" stroke="#2a2a2a" stroke-width="1"/><ellipse cx="946.0" cy="530.4" rx="3.4" ry="1.5" fill="#e4e4e4" stroke="#2a2a2a" stroke-width="0.9"/>
<path d="M967.4 529.8c.3-1 1-1.5 2-1.5h5.6c1 0 1.7.5 2 1.5l2.8 10.2c.4 1.8-.6 2.5-2.2 2.5H966.2c-1.6 0-2.6-.7-2.2-2.5z" fill="#4d4d4d" stroke="#2a2a2a" stroke-width="1"/><ellipse cx="972.1" cy="530.4" rx="3.4" ry="1.5" fill="#e4e4e4" stroke="#2a2a2a" stroke-width="0.9"/>
<path d="M993.5 529.8c.3-1 1-1.5 2-1.5h5.6c1 0 1.7.5 2 1.5l2.8 10.2c.4 1.8-.6 2.5-2.2 2.5H992.4c-1.6 0-2.6-.7-2.2-2.5z" fill="#0000f0" stroke="#2a2a2a" stroke-width="1"/><ellipse cx="998.3" cy="530.4" rx="3.4" ry="1.5" fill="#e4e4e4" stroke="#2a2a2a" stroke-width="0.9"/>
<path d="M1019.7 529.8c.3-1 1-1.5 2-1.5h5.6c1 0 1.7.5 2 1.5l2.8 10.2c.4 1.8-.6 2.5-2.2 2.5H1018.6c-1.6 0-2.6-.7-2.2-2.5z" fill="#00f060" stroke="#2a2a2a" stroke-width="1"/><ellipse cx="1024.5" cy="530.4" rx="3.4" ry="1.5" fill="#e4e4e4" stroke="#2a2a2a" stroke-width="0.9"/>
<path d="M1045.8 529.8c.3-1 1-1.5 2-1.5h5.6c1 0 1.7.5 2 1.5l2.8 10.2c.4 1.8-.6 2.5-2.2 2.5H1044.7c-1.6 0-2.6-.7-2.2-2.5z" fill="#a04800" stroke="#2a2a2a" stroke-width="1"/><ellipse cx="1050.6" cy="530.4" rx="3.4" ry="1.5" fill="#e4e4e4" stroke="#2a2a2a" stroke-width="0.9"/>
<path d="M1072.0 529.8c.3-1 1-1.5 2-1.5h5.6c1 0 1.7.5 2 1.5l2.8 10.2c.4 1.8-.6 2.5-2.2 2.5H1070.8c-1.6 0-2.6-.7-2.2-2.5z" fill="#f000f0" stroke="#2a2a2a" stroke-width="1"/><ellipse cx="1076.8" cy="530.4" rx="3.4" ry="1.5" fill="#e4e4e4" stroke="#2a2a2a" stroke-width="0.9"/>
<path d="M1098.1 529.8c.3-1 1-1.5 2-1.5h5.6c1 0 1.7.5 2 1.5l2.8 10.2c.4 1.8-.6 2.5-2.2 2.5H1097.0c-1.6 0-2.6-.7-2.2-2.5z" fill="#ff0000" stroke="#2a2a2a" stroke-width="1"/><ellipse cx="1102.9" cy="530.4" rx="3.4" ry="1.5" fill="#e4e4e4" stroke="#2a2a2a" stroke-width="0.9"/>
<path d="M1124.2 529.8c.3-1 1-1.5 2-1.5h5.6c1 0 1.7.5 2 1.5l2.8 10.2c.4 1.8-.6 2.5-2.2 2.5H1123.1c-1.6 0-2.6-.7-2.2-2.5z" fill="#f0a000" stroke="#2a2a2a" stroke-width="1"/><ellipse cx="1129.0" cy="530.4" rx="3.4" ry="1.5" fill="#e4e4e4" stroke="#2a2a2a" stroke-width="0.9"/>
<path d="M941.2 551.8c.3-1 1-1.5 2-1.5h5.6c1 0 1.7.5 2 1.5l2.8 10.2c.4 1.8-.6 2.5-2.2 2.5H940.1c-1.6 0-2.6-.7-2.2-2.5z" fill="#989000" stroke="#2a2a2a" stroke-width="1"/><ellipse cx="946.0" cy="552.4" rx="3.4" ry="1.5" fill="#e4e4e4" stroke="#2a2a2a" stroke-width="0.9"/>
<path d="M967.4 551.8c.3-1 1-1.5 2-1.5h5.6c1 0 1.7.5 2 1.5l2.8 10.2c.4 1.8-.6 2.5-2.2 2.5H966.2c-1.6 0-2.6-.7-2.2-2.5z" fill="#40f0ff" stroke="#2a2a2a" stroke-width="1"/><ellipse cx="972.1" cy="552.4" rx="3.4" ry="1.5" fill="#e4e4e4" stroke="#2a2a2a" stroke-width="0.9"/>
<path d="M993.5 551.8c.3-1 1-1.5 2-1.5h5.6c1 0 1.7.5 2 1.5l2.8 10.2c.4 1.8-.6 2.5-2.2 2.5H992.4c-1.6 0-2.6-.7-2.2-2.5z" fill="#f0f000" stroke="#2a2a2a" stroke-width="1"/><ellipse cx="998.3" cy="552.4" rx="3.4" ry="1.5" fill="#e4e4e4" stroke="#2a2a2a" stroke-width="0.9"/>
<path d="M1019.7 551.8c.3-1 1-1.5 2-1.5h5.6c1 0 1.7.5 2 1.5l2.8 10.2c.4 1.8-.6 2.5-2.2 2.5H1018.6c-1.6 0-2.6-.7-2.2-2.5z" fill="#b000b8" stroke="#2a2a2a" stroke-width="1"/><ellipse cx="1024.5" cy="552.4" rx="3.4" ry="1.5" fill="#e4e4e4" stroke="#2a2a2a" stroke-width="0.9"/>
<path d="M1045.8 551.8c.3-1 1-1.5 2-1.5h5.6c1 0 1.7.5 2 1.5l2.8 10.2c.4 1.8-.6 2.5-2.2 2.5H1044.7c-1.6 0-2.6-.7-2.2-2.5z" fill="#a0ffa0" stroke="#2a2a2a" stroke-width="1"/><ellipse cx="1050.6" cy="552.4" rx="3.4" ry="1.5" fill="#e4e4e4" stroke="#2a2a2a" stroke-width="0.9"/>
<path d="M1072.0 551.8c.3-1 1-1.5 2-1.5h5.6c1 0 1.7.5 2 1.5l2.8 10.2c.4 1.8-.6 2.5-2.2 2.5H1070.8c-1.6 0-2.6-.7-2.2-2.5z" fill="#c0b0b0" stroke="#2a2a2a" stroke-width="1"/><ellipse cx="1076.8" cy="552.4" rx="3.4" ry="1.5" fill="#e4e4e4" stroke="#2a2a2a" stroke-width="0.9"/>
<path d="M1098.1 551.8c.3-1 1-1.5 2-1.5h5.6c1 0 1.7.5 2 1.5l2.8 10.2c.4 1.8-.6 2.5-2.2 2.5H1097.0c-1.6 0-2.6-.7-2.2-2.5z" fill="#800090" stroke="#2a2a2a" stroke-width="1"/><ellipse cx="1102.9" cy="552.4" rx="3.4" ry="1.5" fill="#e4e4e4" stroke="#2a2a2a" stroke-width="0.9"/>
<path d="M1124.2 551.8c.3-1 1-1.5 2-1.5h5.6c1 0 1.7.5 2 1.5l2.8 10.2c.4 1.8-.6 2.5-2.2 2.5H1123.1c-1.6 0-2.6-.7-2.2-2.5z" fill="#a00060" stroke="#2a2a2a" stroke-width="1"/><ellipse cx="1129.0" cy="552.4" rx="3.4" ry="1.5" fill="#e4e4e4" stroke="#2a2a2a" stroke-width="0.9"/>
<path d="M941.2 573.8c.3-1 1-1.5 2-1.5h5.6c1 0 1.7.5 2 1.5l2.8 10.2c.4 1.8-.6 2.5-2.2 2.5H940.1c-1.6 0-2.6-.7-2.2-2.5z" fill="#807080" stroke="#2a2a2a" stroke-width="1"/><ellipse cx="946.0" cy="574.4" rx="3.4" ry="1.5" fill="#e4e4e4" stroke="#2a2a2a" stroke-width="0.9"/>
<path d="M967.4 573.8c.3-1 1-1.5 2-1.5h5.6c1 0 1.7.5 2 1.5l2.8 10.2c.4 1.8-.6 2.5-2.2 2.5H966.2c-1.6 0-2.6-.7-2.2-2.5z" fill="#600040" stroke="#2a2a2a" stroke-width="1"/><ellipse cx="972.1" cy="574.4" rx="3.4" ry="1.5" fill="#e4e4e4" stroke="#2a2a2a" stroke-width="0.9"/>
<path d="M993.5 573.8c.3-1 1-1.5 2-1.5h5.6c1 0 1.7.5 2 1.5l2.8 10.2c.4 1.8-.6 2.5-2.2 2.5H992.4c-1.6 0-2.6-.7-2.2-2.5z" fill="#30108a" stroke="#2a2a2a" stroke-width="1"/><ellipse cx="998.3" cy="574.4" rx="3.4" ry="1.5" fill="#e4e4e4" stroke="#2a2a2a" stroke-width="0.9"/>
<path d="M1019.7 573.8c.3-1 1-1.5 2-1.5h5.6c1 0 1.7.5 2 1.5l2.8 10.2c.4 1.8-.6 2.5-2.2 2.5H1018.6c-1.6 0-2.6-.7-2.2-2.5z" fill="#508a50" stroke="#2a2a2a" stroke-width="1"/><ellipse cx="1024.5" cy="574.4" rx="3.4" ry="1.5" fill="#e4e4e4" stroke="#2a2a2a" stroke-width="0.9"/>
<path d="M1045.8 573.8c.3-1 1-1.5 2-1.5h5.6c1 0 1.7.5 2 1.5l2.8 10.2c.4 1.8-.6 2.5-2.2 2.5H1044.7c-1.6 0-2.6-.7-2.2-2.5z" fill="#983050" stroke="#2a2a2a" stroke-width="1"/><ellipse cx="1050.6" cy="574.4" rx="3.4" ry="1.5" fill="#e4e4e4" stroke="#2a2a2a" stroke-width="0.9"/>
<path d="M1072.0 573.8c.3-1 1-1.5 2-1.5h5.6c1 0 1.7.5 2 1.5l2.8 10.2c.4 1.8-.6 2.5-2.2 2.5H1070.8c-1.6 0-2.6-.7-2.2-2.5z" fill="#c030a8" stroke="#2a2a2a" stroke-width="1"/><ellipse cx="1076.8" cy="574.4" rx="3.4" ry="1.5" fill="#e4e4e4" stroke="#2a2a2a" stroke-width="0.9"/>
<path d="M1098.1 573.8c.3-1 1-1.5 2-1.5h5.6c1 0 1.7.5 2 1.5l2.8 10.2c.4 1.8-.6 2.5-2.2 2.5H1097.0c-1.6 0-2.6-.7-2.2-2.5z" fill="#7070ff" stroke="#2a2a2a" stroke-width="1"/><ellipse cx="1102.9" cy="574.4" rx="3.4" ry="1.5" fill="#e4e4e4" stroke="#2a2a2a" stroke-width="0.9"/>
<path d="M1124.2 573.8c.3-1 1-1.5 2-1.5h5.6c1 0 1.7.5 2 1.5l2.8 10.2c.4 1.8-.6 2.5-2.2 2.5H1123.1c-1.6 0-2.6-.7-2.2-2.5z" fill="#ff7010" stroke="#2a2a2a" stroke-width="1"/><ellipse cx="1129.0" cy="574.4" rx="3.4" ry="1.5" fill="#e4e4e4" stroke="#2a2a2a" stroke-width="0.9"/>
<path d="M941.2 595.8c.3-1 1-1.5 2-1.5h5.6c1 0 1.7.5 2 1.5l2.8 10.2c.4 1.8-.6 2.5-2.2 2.5H940.1c-1.6 0-2.6-.7-2.2-2.5z" fill="#d8d8d8" stroke="#2a2a2a" stroke-width="1"/><ellipse cx="946.0" cy="596.4" rx="3.4" ry="1.5" fill="#e4e4e4" stroke="#2a2a2a" stroke-width="0.9"/>
<path d="M967.4 595.8c.3-1 1-1.5 2-1.5h5.6c1 0 1.7.5 2 1.5l2.8 10.2c.4 1.8-.6 2.5-2.2 2.5H966.2c-1.6 0-2.6-.7-2.2-2.5z" fill="#701040" stroke="#2a2a2a" stroke-width="1"/><ellipse cx="972.1" cy="596.4" rx="3.4" ry="1.5" fill="#e4e4e4" stroke="#2a2a2a" stroke-width="0.9"/>
<path d="M993.5 595.8c.3-1 1-1.5 2-1.5h5.6c1 0 1.7.5 2 1.5l2.8 10.2c.4 1.8-.6 2.5-2.2 2.5H992.4c-1.6 0-2.6-.7-2.2-2.5z" fill="#606880" stroke="#2a2a2a" stroke-width="1"/><ellipse cx="998.3" cy="596.4" rx="3.4" ry="1.5" fill="#e4e4e4" stroke="#2a2a2a" stroke-width="0.9"/>
<path d="M1019.7 595.8c.3-1 1-1.5 2-1.5h5.6c1 0 1.7.5 2 1.5l2.8 10.2c.4 1.8-.6 2.5-2.2 2.5H1018.6c-1.6 0-2.6-.7-2.2-2.5z" fill="#806070" stroke="#2a2a2a" stroke-width="1"/><ellipse cx="1024.5" cy="596.4" rx="3.4" ry="1.5" fill="#e4e4e4" stroke="#2a2a2a" stroke-width="0.9"/>
<path d="M1045.8 595.8c.3-1 1-1.5 2-1.5h5.6c1 0 1.7.5 2 1.5l2.8 10.2c.4 1.8-.6 2.5-2.2 2.5H1044.7c-1.6 0-2.6-.7-2.2-2.5z" fill="#106018" stroke="#2a2a2a" stroke-width="1"/><ellipse cx="1050.6" cy="596.4" rx="3.4" ry="1.5" fill="#e4e4e4" stroke="#2a2a2a" stroke-width="0.9"/>
<path d="M1072.0 595.8c.3-1 1-1.5 2-1.5h5.6c1 0 1.7.5 2 1.5l2.8 10.2c.4 1.8-.6 2.5-2.2 2.5H1070.8c-1.6 0-2.6-.7-2.2-2.5z" fill="#2060a8" stroke="#2a2a2a" stroke-width="1"/><ellipse cx="1076.8" cy="596.4" rx="3.4" ry="1.5" fill="#e4e4e4" stroke="#2a2a2a" stroke-width="0.9"/>
<path d="M1098.1 595.8c.3-1 1-1.5 2-1.5h5.6c1 0 1.7.5 2 1.5l2.8 10.2c.4 1.8-.6 2.5-2.2 2.5H1097.0c-1.6 0-2.6-.7-2.2-2.5z" fill="#e8c070" stroke="#2a2a2a" stroke-width="1"/><ellipse cx="1102.9" cy="596.4" rx="3.4" ry="1.5" fill="#e4e4e4" stroke="#2a2a2a" stroke-width="0.9"/>
<path d="M1124.2 595.8c.3-1 1-1.5 2-1.5h5.6c1 0 1.7.5 2 1.5l2.8 10.2c.4 1.8-.6 2.5-2.2 2.5H1123.1c-1.6 0-2.6-.7-2.2-2.5z" fill="#80b8a8" stroke="#2a2a2a" stroke-width="1"/><ellipse cx="1129.0" cy="596.4" rx="3.4" ry="1.5" fill="#e4e4e4" stroke="#2a2a2a" stroke-width="0.9"/>
<path d="M941.2 617.8c.3-1 1-1.5 2-1.5h5.6c1 0 1.7.5 2 1.5l2.8 10.2c.4 1.8-.6 2.5-2.2 2.5H940.1c-1.6 0-2.6-.7-2.2-2.5z" fill="#f0f000" stroke="#2a2a2a" stroke-width="1"/><ellipse cx="946.0" cy="618.4" rx="3.4" ry="1.5" fill="#e4e4e4" stroke="#2a2a2a" stroke-width="0.9"/>
<path d="M967.4 617.8c.3-1 1-1.5 2-1.5h5.6c1 0 1.7.5 2 1.5l2.8 10.2c.4 1.8-.6 2.5-2.2 2.5H966.2c-1.6 0-2.6-.7-2.2-2.5z" fill="#505850" stroke="#2a2a2a" stroke-width="1"/><ellipse cx="972.1" cy="618.4" rx="3.4" ry="1.5" fill="#e4e4e4" stroke="#2a2a2a" stroke-width="0.9"/>
<path d="M993.5 617.8c.3-1 1-1.5 2-1.5h5.6c1 0 1.7.5 2 1.5l2.8 10.2c.4 1.8-.6 2.5-2.2 2.5H992.4c-1.6 0-2.6-.7-2.2-2.5z" fill="#100000" stroke="#2a2a2a" stroke-width="1"/><ellipse cx="998.3" cy="618.4" rx="3.4" ry="1.5" fill="#e4e4e4" stroke="#2a2a2a" stroke-width="0.9"/>
<path d="M1019.7 617.8c.3-1 1-1.5 2-1.5h5.6c1 0 1.7.5 2 1.5l2.8 10.2c.4 1.8-.6 2.5-2.2 2.5H1018.6c-1.6 0-2.6-.7-2.2-2.5z" fill="#6000f8" stroke="#2a2a2a" stroke-width="1"/><ellipse cx="1024.5" cy="618.4" rx="3.4" ry="1.5" fill="#e4e4e4" stroke="#2a2a2a" stroke-width="0.9"/>
<path d="M1045.8 617.8c.3-1 1-1.5 2-1.5h5.6c1 0 1.7.5 2 1.5l2.8 10.2c.4 1.8-.6 2.5-2.2 2.5H1044.7c-1.6 0-2.6-.7-2.2-2.5z" fill="#00a050" stroke="#2a2a2a" stroke-width="1"/><ellipse cx="1050.6" cy="618.4" rx="3.4" ry="1.5" fill="#e4e4e4" stroke="#2a2a2a" stroke-width="0.9"/>
<path d="M1072.0 617.8c.3-1 1-1.5 2-1.5h5.6c1 0 1.7.5 2 1.5l2.8 10.2c.4 1.8-.6 2.5-2.2 2.5H1070.8c-1.6 0-2.6-.7-2.2-2.5z" fill="#d0e878" stroke="#2a2a2a" stroke-width="1"/><ellipse cx="1076.8" cy="618.4" rx="3.4" ry="1.5" fill="#e4e4e4" stroke="#2a2a2a" stroke-width="0.9"/>
<path d="M1098.1 617.8c.3-1 1-1.5 2-1.5h5.6c1 0 1.7.5 2 1.5l2.8 10.2c.4 1.8-.6 2.5-2.2 2.5H1097.0c-1.6 0-2.6-.7-2.2-2.5z" fill="#00c000" stroke="#2a2a2a" stroke-width="1"/><ellipse cx="1102.9" cy="618.4" rx="3.4" ry="1.5" fill="#e4e4e4" stroke="#2a2a2a" stroke-width="0.9"/>
<path d="M1124.2 617.8c.3-1 1-1.5 2-1.5h5.6c1 0 1.7.5 2 1.5l2.8 10.2c.4 1.8-.6 2.5-2.2 2.5H1123.1c-1.6 0-2.6-.7-2.2-2.5z" fill="#00e898" stroke="#2a2a2a" stroke-width="1"/><ellipse cx="1129.0" cy="618.4" rx="3.4" ry="1.5" fill="#e4e4e4" stroke="#2a2a2a" stroke-width="0.9"/>
<path d="M941.2 639.8c.3-1 1-1.5 2-1.5h5.6c1 0 1.7.5 2 1.5l2.8 10.2c.4 1.8-.6 2.5-2.2 2.5H940.1c-1.6 0-2.6-.7-2.2-2.5z" fill="#008888" stroke="#2a2a2a" stroke-width="1"/><ellipse cx="946.0" cy="640.4" rx="3.4" ry="1.5" fill="#e4e4e4" stroke="#2a2a2a" stroke-width="0.9"/>
<path d="M967.4 639.8c.3-1 1-1.5 2-1.5h5.6c1 0 1.7.5 2 1.5l2.8 10.2c.4 1.8-.6 2.5-2.2 2.5H966.2c-1.6 0-2.6-.7-2.2-2.5z" fill="#ff48ff" stroke="#2a2a2a" stroke-width="1"/><ellipse cx="972.1" cy="640.4" rx="3.4" ry="1.5" fill="#e4e4e4" stroke="#2a2a2a" stroke-width="0.9"/>
<path d="M993.5 639.8c.3-1 1-1.5 2-1.5h5.6c1 0 1.7.5 2 1.5l2.8 10.2c.4 1.8-.6 2.5-2.2 2.5H992.4c-1.6 0-2.6-.7-2.2-2.5z" fill="#00e8f0" stroke="#2a2a2a" stroke-width="1"/><ellipse cx="998.3" cy="640.4" rx="3.4" ry="1.5" fill="#e4e4e4" stroke="#2a2a2a" stroke-width="0.9"/>
<path d="M1019.7 639.8c.3-1 1-1.5 2-1.5h5.6c1 0 1.7.5 2 1.5l2.8 10.2c.4 1.8-.6 2.5-2.2 2.5H1018.6c-1.6 0-2.6-.7-2.2-2.5z" fill="#c8c000" stroke="#2a2a2a" stroke-width="1"/><ellipse cx="1024.5" cy="640.4" rx="3.4" ry="1.5" fill="#e4e4e4" stroke="#2a2a2a" stroke-width="0.9"/>
<path d="M1045.8 639.8c.3-1 1-1.5 2-1.5h5.6c1 0 1.7.5 2 1.5l2.8 10.2c.4 1.8-.6 2.5-2.2 2.5H1044.7c-1.6 0-2.6-.7-2.2-2.5z" fill="#a0a0ff" stroke="#2a2a2a" stroke-width="1"/><ellipse cx="1050.6" cy="640.4" rx="3.4" ry="1.5" fill="#e4e4e4" stroke="#2a2a2a" stroke-width="0.9"/>
<path d="M1072.0 639.8c.3-1 1-1.5 2-1.5h5.6c1 0 1.7.5 2 1.5l2.8 10.2c.4 1.8-.6 2.5-2.2 2.5H1070.8c-1.6 0-2.6-.7-2.2-2.5z" fill="#a0a0a0" stroke="#2a2a2a" stroke-width="1"/><ellipse cx="1076.8" cy="640.4" rx="3.4" ry="1.5" fill="#e4e4e4" stroke="#2a2a2a" stroke-width="0.9"/>
<path d="M1098.1 639.8c.3-1 1-1.5 2-1.5h5.6c1 0 1.7.5 2 1.5l2.8 10.2c.4 1.8-.6 2.5-2.2 2.5H1097.0c-1.6 0-2.6-.7-2.2-2.5z" fill="#887000" stroke="#2a2a2a" stroke-width="1"/><ellipse cx="1102.9" cy="640.4" rx="3.4" ry="1.5" fill="#e4e4e4" stroke="#2a2a2a" stroke-width="0.9"/>
<path d="M1124.2 639.8c.3-1 1-1.5 2-1.5h5.6c1 0 1.7.5 2 1.5l2.8 10.2c.4 1.8-.6 2.5-2.2 2.5H1123.1c-1.6 0-2.6-.7-2.2-2.5z" fill="#60a000" stroke="#2a2a2a" stroke-width="1"/><ellipse cx="1129.0" cy="640.4" rx="3.4" ry="1.5" fill="#e4e4e4" stroke="#2a2a2a" stroke-width="0.9"/>
<path d="M941.2 661.8c.3-1 1-1.5 2-1.5h5.6c1 0 1.7.5 2 1.5l2.8 10.2c.4 1.8-.6 2.5-2.2 2.5H940.1c-1.6 0-2.6-.7-2.2-2.5z" fill="#808078" stroke="#2a2a2a" stroke-width="1"/><ellipse cx="946.0" cy="662.4" rx="3.4" ry="1.5" fill="#e4e4e4" stroke="#2a2a2a" stroke-width="0.9"/>
<path d="M967.4 661.8c.3-1 1-1.5 2-1.5h5.6c1 0 1.7.5 2 1.5l2.8 10.2c.4 1.8-.6 2.5-2.2 2.5H966.2c-1.6 0-2.6-.7-2.2-2.5z" fill="#405000" stroke="#2a2a2a" stroke-width="1"/><ellipse cx="972.1" cy="662.4" rx="3.4" ry="1.5" fill="#e4e4e4" stroke="#2a2a2a" stroke-width="0.9"/>
<path d="M993.5 661.8c.3-1 1-1.5 2-1.5h5.6c1 0 1.7.5 2 1.5l2.8 10.2c.4 1.8-.6 2.5-2.2 2.5H992.4c-1.6 0-2.6-.7-2.2-2.5z" fill="#802810" stroke="#2a2a2a" stroke-width="1"/><ellipse cx="998.3" cy="662.4" rx="3.4" ry="1.5" fill="#e4e4e4" stroke="#2a2a2a" stroke-width="0.9"/>
<path d="M1019.7 661.8c.3-1 1-1.5 2-1.5h5.6c1 0 1.7.5 2 1.5l2.8 10.2c.4 1.8-.6 2.5-2.2 2.5H1018.6c-1.6 0-2.6-.7-2.2-2.5z" fill="#505090" stroke="#2a2a2a" stroke-width="1"/><ellipse cx="1024.5" cy="662.4" rx="3.4" ry="1.5" fill="#e4e4e4" stroke="#2a2a2a" stroke-width="0.9"/>
<path d="M1045.8 661.8c.3-1 1-1.5 2-1.5h5.6c1 0 1.7.5 2 1.5l2.8 10.2c.4 1.8-.6 2.5-2.2 2.5H1044.7c-1.6 0-2.6-.7-2.2-2.5z" fill="#409838" stroke="#2a2a2a" stroke-width="1"/><ellipse cx="1050.6" cy="662.4" rx="3.4" ry="1.5" fill="#e4e4e4" stroke="#2a2a2a" stroke-width="0.9"/>
<path d="M1072.0 661.8c.3-1 1-1.5 2-1.5h5.6c1 0 1.7.5 2 1.5l2.8 10.2c.4 1.8-.6 2.5-2.2 2.5H1070.8c-1.6 0-2.6-.7-2.2-2.5z" fill="#98c820" stroke="#2a2a2a" stroke-width="1"/><ellipse cx="1076.8" cy="662.4" rx="3.4" ry="1.5" fill="#e4e4e4" stroke="#2a2a2a" stroke-width="0.9"/>
<path d="M1098.1 661.8c.3-1 1-1.5 2-1.5h5.6c1 0 1.7.5 2 1.5l2.8 10.2c.4 1.8-.6 2.5-2.2 2.5H1097.0c-1.6 0-2.6-.7-2.2-2.5z" fill="#ff7070" stroke="#2a2a2a" stroke-width="1"/><ellipse cx="1102.9" cy="662.4" rx="3.4" ry="1.5" fill="#e4e4e4" stroke="#2a2a2a" stroke-width="0.9"/>
<path d="M1124.2 661.8c.3-1 1-1.5 2-1.5h5.6c1 0 1.7.5 2 1.5l2.8 10.2c.4 1.8-.6 2.5-2.2 2.5H1123.1c-1.6 0-2.6-.7-2.2-2.5z" fill="#00d868" stroke="#2a2a2a" stroke-width="1"/><ellipse cx="1129.0" cy="662.4" rx="3.4" ry="1.5" fill="#e4e4e4" stroke="#2a2a2a" stroke-width="0.9"/>
<path d="M941.2 683.8c.3-1 1-1.5 2-1.5h5.6c1 0 1.7.5 2 1.5l2.8 10.2c.4 1.8-.6 2.5-2.2 2.5H940.1c-1.6 0-2.6-.7-2.2-2.5z" fill="#d0e8e8" stroke="#2a2a2a" stroke-width="1"/><ellipse cx="946.0" cy="684.4" rx="3.4" ry="1.5" fill="#e4e4e4" stroke="#2a2a2a" stroke-width="0.9"/>
<path d="M967.4 683.8c.3-1 1-1.5 2-1.5h5.6c1 0 1.7.5 2 1.5l2.8 10.2c.4 1.8-.6 2.5-2.2 2.5H966.2c-1.6 0-2.6-.7-2.2-2.5z" fill="#408000" stroke="#2a2a2a" stroke-width="1"/><ellipse cx="972.1" cy="684.4" rx="3.4" ry="1.5" fill="#e4e4e4" stroke="#2a2a2a" stroke-width="0.9"/>
<path d="M993.5 683.8c.3-1 1-1.5 2-1.5h5.6c1 0 1.7.5 2 1.5l2.8 10.2c.4 1.8-.6 2.5-2.2 2.5H992.4c-1.6 0-2.6-.7-2.2-2.5z" fill="#908888" stroke="#2a2a2a" stroke-width="1"/><ellipse cx="998.3" cy="684.4" rx="3.4" ry="1.5" fill="#e4e4e4" stroke="#2a2a2a" stroke-width="0.9"/>
<path d="M1019.7 683.8c.3-1 1-1.5 2-1.5h5.6c1 0 1.7.5 2 1.5l2.8 10.2c.4 1.8-.6 2.5-2.2 2.5H1018.6c-1.6 0-2.6-.7-2.2-2.5z" fill="#505850" stroke="#2a2a2a" stroke-width="1"/><ellipse cx="1024.5" cy="684.4" rx="3.4" ry="1.5" fill="#e4e4e4" stroke="#2a2a2a" stroke-width="0.9"/>
<path d="M1045.8 683.8c.3-1 1-1.5 2-1.5h5.6c1 0 1.7.5 2 1.5l2.8 10.2c.4 1.8-.6 2.5-2.2 2.5H1044.7c-1.6 0-2.6-.7-2.2-2.5z" fill="#000048" stroke="#2a2a2a" stroke-width="1"/><ellipse cx="1050.6" cy="684.4" rx="3.4" ry="1.5" fill="#e4e4e4" stroke="#2a2a2a" stroke-width="0.9"/>
<path d="M1072.0 683.8c.3-1 1-1.5 2-1.5h5.6c1 0 1.7.5 2 1.5l2.8 10.2c.4 1.8-.6 2.5-2.2 2.5H1070.8c-1.6 0-2.6-.7-2.2-2.5z" fill="#800048" stroke="#2a2a2a" stroke-width="1"/><ellipse cx="1076.8" cy="684.4" rx="3.4" ry="1.5" fill="#e4e4e4" stroke="#2a2a2a" stroke-width="0.9"/>
<path d="M1098.1 683.8c.3-1 1-1.5 2-1.5h5.6c1 0 1.7.5 2 1.5l2.8 10.2c.4 1.8-.6 2.5-2.2 2.5H1097.0c-1.6 0-2.6-.7-2.2-2.5z" fill="#80ffe0" stroke="#2a2a2a" stroke-width="1"/><ellipse cx="1102.9" cy="684.4" rx="3.4" ry="1.5" fill="#e4e4e4" stroke="#2a2a2a" stroke-width="0.9"/>
<path d="M1124.2 683.8c.3-1 1-1.5 2-1.5h5.6c1 0 1.7.5 2 1.5l2.8 10.2c.4 1.8-.6 2.5-2.2 2.5H1123.1c-1.6 0-2.6-.7-2.2-2.5z" fill="#d0b8d8" stroke="#2a2a2a" stroke-width="1"/><ellipse cx="1129.0" cy="684.4" rx="3.4" ry="1.5" fill="#e4e4e4" stroke="#2a2a2a" stroke-width="0.9"/>
<circle cx="949.5" cy="531.5" r="4" fill="#333"/><path d="M947.5 531.5l1.5 1.6 2.6-3" fill="none" stroke="#fff" stroke-width="1.1"/>
<path d="M1167 252.5l5-5 5 5v-2.5l-5-5-5 5z" fill="#444" stroke="#444" stroke-width="1.2" stroke-linejoin="round"/><rect x="1171" y="254" width="2" height="76" fill="#3c3c3c"/><rect x="1167" y="255" width="10" height="29" rx="5" fill="#484848"/><path d="M1167 331.5l5 5 5-5v2.5l-5 5-5-5z" fill="#444" stroke="#444" stroke-width="1.2" stroke-linejoin="round"/>
<path d="M1167 514.5l5-5 5 5v-2.5l-5-5-5 5z" fill="#444" stroke="#444" stroke-width="1.2" stroke-linejoin="round"/><rect x="1171" y="516" width="2" height="218" fill="#3c3c3c"/><rect x="1167" y="517" width="10" height="194" rx="5" fill="#484848"/><path d="M1167 735.5l5 5 5-5v2.5l-5 5-5-5z" fill="#444" stroke="#444" stroke-width="1.2" stroke-linejoin="round"/>
<g transform="translate(932 245.5)" fill="none" stroke="#111" stroke-width="1.3"><path d="M0 9.5H21" stroke-width="2"/><circle cx="7.5" cy="13.8" r="3.2"/><path d="M13 12.5h7.5l-3.75 5z" fill="#a01020" stroke="none"/></g>
<g transform="translate(957 245.5)" fill="none" stroke="#111" stroke-width="1.3"><path d="M1.5 6.5l4-5.5 4 5.5z" fill="#2e8b3a" stroke="none"/><path d="M0 9.5H21" stroke-width="2"/><circle cx="14" cy="5.3" r="3.2"/></g>
<g transform="translate(982 245.5)" fill="none" stroke="#111" stroke-width="1.3"><path d="M0 9.5c2.5 0 2.5 1 2.5 3.2 0 2.8 1.6 4.5 3.5 4.5s3.5-1.7 3.5-4.5c0-2.2 0-3.2 2.5-3.2H21" stroke-width="1.6"/><path d="M12 9.5H21" stroke-width="2"/><path d="M13 13h7.5l-3.75 5z" fill="#a01020" stroke="none"/></g>
<g transform="translate(1007 245.5)" fill="none" stroke="#111" stroke-width="1.3"><path d="M1.5 5.5l4-5 4 5.5z" fill="#2e8b3a" stroke="none"/><path d="M0 8.5H11" stroke-width="2"/><path d="M10 8.5c1.5 0 1.5-1 1.5-3 0-3 1.5-4.5 3.3-4.5s3.3 1.5 3.3 4.5c0 2 0 3 1.5 3h1.4" stroke-width="1.4"/></g>
<g transform="translate(1042 245.5)" fill="none" stroke="#111" stroke-width="1.3"><path d="M0 9.5H21" stroke-width="2"/><path d="M13 12.5h7.5l-3.75 5z" fill="#a01020" stroke="none"/></g>
<g transform="translate(1067 245.5)" fill="none" stroke="#111" stroke-width="1.3"><path d="M1.5 6.5l4-5.5 4 5.5z" fill="#2e8b3a" stroke="none"/><path d="M0 8.5H21" stroke-width="2"/></g>
<g transform="translate(1092 245.5)" fill="none" stroke="#111" stroke-width="1.3"><path d="M0 9.5H21" stroke-width="2"/><circle cx="10.5" cy="3.5" r="1.3" fill="#111" stroke="none"/><circle cx="10.5" cy="15" r="1.3" fill="#111" stroke="none"/></g>
<g transform="translate(932 271.5)" fill="none" stroke="#111" stroke-width="1.3"><path d="M0 9.5c4 0 6 .5 8 1.8 2-1.3 4-1.8 6-1.8h7" stroke-width="1.6"/><circle cx="7.5" cy="14" r="3"/><circle cx="7.5" cy="14" r="0.8" fill="#111" stroke="none"/><circle cx="14" cy="5" r="3"/><circle cx="14" cy="5" r="0.8" fill="#111" stroke="none"/></g>
<g transform="translate(957 271.5)" fill="none" stroke="#111" stroke-width="1.3"><path d="M0 9.5c3 0 5 .5 7 1.8c2.5-1.5 3.5-4 4.5-7 .7-2 1.8-3.5 3.2-3.5s2.8 1.5 2.8 4c0 3 1 4.2 3.5 4.2" stroke-width="1.4"/><path d="M18 9.5h3" stroke-width="2"/><circle cx="7.5" cy="14" r="3"/><circle cx="7.5" cy="14" r="0.8" fill="#111" stroke="none"/></g>
<g transform="translate(982 271.5)" fill="none" stroke="#111" stroke-width="1.3"><path d="M0 8.5c2 0 2 1.5 2 3.5 0 2.5 1.5 4.5 3.5 4.5S9 14.5 9 12c0-1.5.5-2.5 3-2.5H21" stroke-width="1.4"/><path d="M12 9.5H21" stroke-width="2"/><circle cx="5.5" cy="12.5" r="0.8" fill="#111" stroke="none"/><circle cx="14" cy="5" r="3"/><circle cx="14" cy="5" r="0.8" fill="#111" stroke="none"/></g>
<g transform="translate(1007 271.5)" fill="none" stroke="#111" stroke-width="1.3"><path d="M0 8.5c2 0 2 1.5 2 3.5 0 2.5 1.5 4.5 3.5 4.5S9 14.5 9 12l2.5-7.5c.7-2 1.8-3.5 3.2-3.5s2.8 1.5 2.8 4c0 3 1 4.2 3.5 4.2" stroke-width="1.4"/><circle cx="5.5" cy="12.5" r="0.8" fill="#111" stroke="none"/><circle cx="14.5" cy="4.5" r="0.8" fill="#111" stroke="none"/></g>
<g transform="translate(1042 271.5)" fill="none" stroke="#111" stroke-width="1.3"><path d="M0 9.5h6c2 0 3 1 4.5 2 1.5-1 2.5-2 4.5-2h6" stroke-width="1.8"/><circle cx="10.5" cy="14.5" r="3"/><circle cx="10.5" cy="14.5" r="0.8" fill="#111" stroke="none"/></g>
<g transform="translate(1067 271.5)" fill="none" stroke="#111" stroke-width="1.3"><path d="M0 9.5h6c2 0 3-.5 4.5-1.8 1.5 1.3 2.5 1.8 4.5 1.8h6" stroke-width="1.8"/><circle cx="10.5" cy="4.5" r="3"/><circle cx="10.5" cy="4.5" r="0.8" fill="#111" stroke="none"/></g>
<g transform="translate(1092 271.5)" fill="none" stroke="#111" stroke-width="1.3"><path d="M0 9.5h5.5c1.5 0 1.5 1 1.5 2.5 0 2.5 1.5 4.5 3.5 4.5s3.5-2 3.5-4.5c0-1.5 0-2.5 1.5-2.5H21" stroke-width="1.6"/><circle cx="10.5" cy="13" r="0.8" fill="#111" stroke="none"/></g>
<g transform="translate(1117 271.5)" fill="none" stroke="#111" stroke-width="1.3"><path d="M0 9.5h5.5c1.5 0 1.5-1 1.5-2.5 0-2.5 1.5-4.5 3.5-4.5s3.5 2 3.5 4.5c0 1.5 0 2.5 1.5 2.5H21" stroke-width="1.6"/><circle cx="10.5" cy="5.5" r="0.8" fill="#111" stroke="none"/></g>
<g transform="translate(932 296)" fill="none" stroke="#111" stroke-width="1.3"><g transform="translate(0 0)"><path d="M3.5 14.8c0 2.5 1.5 3.8 3.2 3.8s3.2-1.3 3.2-3.8V10.3"/><path d="M7.7 10.8l2.2-3.2 2.2 3.2z" fill="#111" stroke="none"/></g></g>
<g transform="translate(957 296)" fill="none" stroke="#111" stroke-width="1.3"><g transform="translate(0 0)"><path d="M10.5 7.5V4.5c0-2.2 1.5-3.8 3.5-3.8s3.5 1.6 3.5 3.8V8.2"/><path d="M15.3 8.3l2.2 3.2 2.2-3.2z" fill="#111" stroke="none"/></g></g>
<g transform="translate(982 296)" fill="none" stroke="#111" stroke-width="1.3"><g transform="translate(-1 0)"><path d="M3.5 14.8c0 2.5 1.5 3.8 3.2 3.8s3.2-1.3 3.2-3.8V10.3"/><path d="M7.7 10.8l2.2-3.2 2.2 3.2z" fill="#111" stroke="none"/></g><g transform="translate(-1 0)"><path d="M10.5 7.5V4.5c0-2.2 1.5-3.8 3.5-3.8s3.5 1.6 3.5 3.8V8.2"/><path d="M15.3 8.3l2.2 3.2 2.2-3.2z" fill="#111" stroke="none"/></g></g>
<g transform="translate(1007 296)" fill="none" stroke="#111" stroke-width="1.3"><g transform="translate(-1 0)"><path d="M3.5 14.8c0 2.5 1.5 3.8 3.2 3.8s3.2-1.3 3.2-3.8V10.3"/><path d="M7.7 10.8l2.2-3.2 2.2 3.2z" fill="#111" stroke="none"/></g><g transform="translate(-1 0)"><path d="M10.5 7.5V4.5c0-2.2 1.5-3.8 3.5-3.8s3.5 1.6 3.5 3.8V8.2"/></g></g>
<g transform="translate(1042 296)" fill="none" stroke="#111" stroke-width="1.3"><path d="M3 14.5v1.5c0 2 1.3 3.2 3 3.2s3-1.2 3-3.2v-1.5"/></g>
<g transform="translate(1067 296)" fill="none" stroke="#111" stroke-width="1.3"><path d="M10 7V5.5c0-2 1.3-3.5 3.5-3.5s3.5 1.5 3.5 3.5V7"/></g>
<g transform="translate(1092 296)" fill="none" stroke="#111" stroke-width="1.3"><path d="M3 14.5v1.5c0 2 1.3 3.2 3 3.2s3-1.2 3-3.2v-1.5"/><path d="M10 7V5.5c0-2 1.3-3.5 3.5-3.5s3.5 1.5 3.5 3.5V7"/></g>
<g transform="translate(1117 296)" fill="none" stroke="#111" stroke-width="1.3"><path d="M3 14.5v1.5c0 2 1.3 3.2 3 3.2s3-1.2 3-3.2v-1.5"/><path d="M10 7V5.5c0-2 1.3-3.5 3.5-3.5s3.5 1.5 3.5 3.5V9"/><path d="M14.8 9.5l2.5 3.5 2.5-3.5z" fill="#111" stroke="none"/></g>
<g transform="translate(932 321)" fill="none" stroke="#111" stroke-width="1.3"><path d="M0 9.5H21" stroke-width="2"/><path d="M5.5 5.5l2.5-4 2.5 4"/><circle cx="7.5" cy="13.8" r="3.2"/><path d="M13 12.5h7.5l-3.75 5z" fill="#a01020" stroke="none"/></g>
<g transform="translate(957 321)" fill="none" stroke="#111" stroke-width="1.3"><path d="M1.5 6.5l4-5.5 4 5.5z" fill="#2e8b3a" stroke="none"/><path d="M0 8.5H21" stroke-width="2"/><circle cx="14" cy="4.8" r="3.2"/><path d="M12 11.5l2.5 5 2.5-5"/></g>
<g transform="translate(982 321)" fill="none" stroke="#111" stroke-width="1.3"><path d="M0 9.5H21" stroke-width="2"/><path d="M8 5.5l2.5-4 2.5 4"/><circle cx="10.5" cy="14" r="3"/><circle cx="10.5" cy="14" r="0.8" fill="#111" stroke="none"/></g>
<g transform="translate(1007 321)" fill="none" stroke="#111" stroke-width="1.3"><path d="M0 8.5H21" stroke-width="2"/><circle cx="10.5" cy="4.5" r="3"/><circle cx="10.5" cy="4.5" r="0.8" fill="#111" stroke="none"/><path d="M8 11.5l2.5 5 2.5-5"/></g>
<g transform="translate(1042 321)" fill="none" stroke="#111" stroke-width="1.3"><path d="M10.5 1.8l-4.5 5.5h3v9.7h3V7.3h3z" fill="#2e8b3a" stroke="none"/></g>
<g transform="translate(1067 321)" fill="none" stroke="#111" stroke-width="1.3"><path d="M10.5 1l-4.5 5h9z" fill="#2e8b3a" stroke="none"/><path d="M9 7.5h3v2H9zM9 10.7h3v2H9zM9 13.9h3v2H9z" fill="#2e8b3a" stroke="none"/></g>
<g transform="translate(1092 321)" fill="none" stroke="#111" stroke-width="1.3"><path d="M10.5 17.5l-4.5-5.5h3V2h3v10h3z" fill="#98101c" stroke="none"/></g>
<g transform="translate(1117 321)" fill="none" stroke="#111" stroke-width="1.3"><path d="M10.5 17.5l-4.5-5h9z" fill="#98101c" stroke="none"/><path d="M9 2h3v1.8H9zM9 5.2h3v2H9zM9 8.6h3v2H9z" fill="#98101c" stroke="none"/></g>
</svg>
</div>
<div id="frame"></div>
</body></html>
